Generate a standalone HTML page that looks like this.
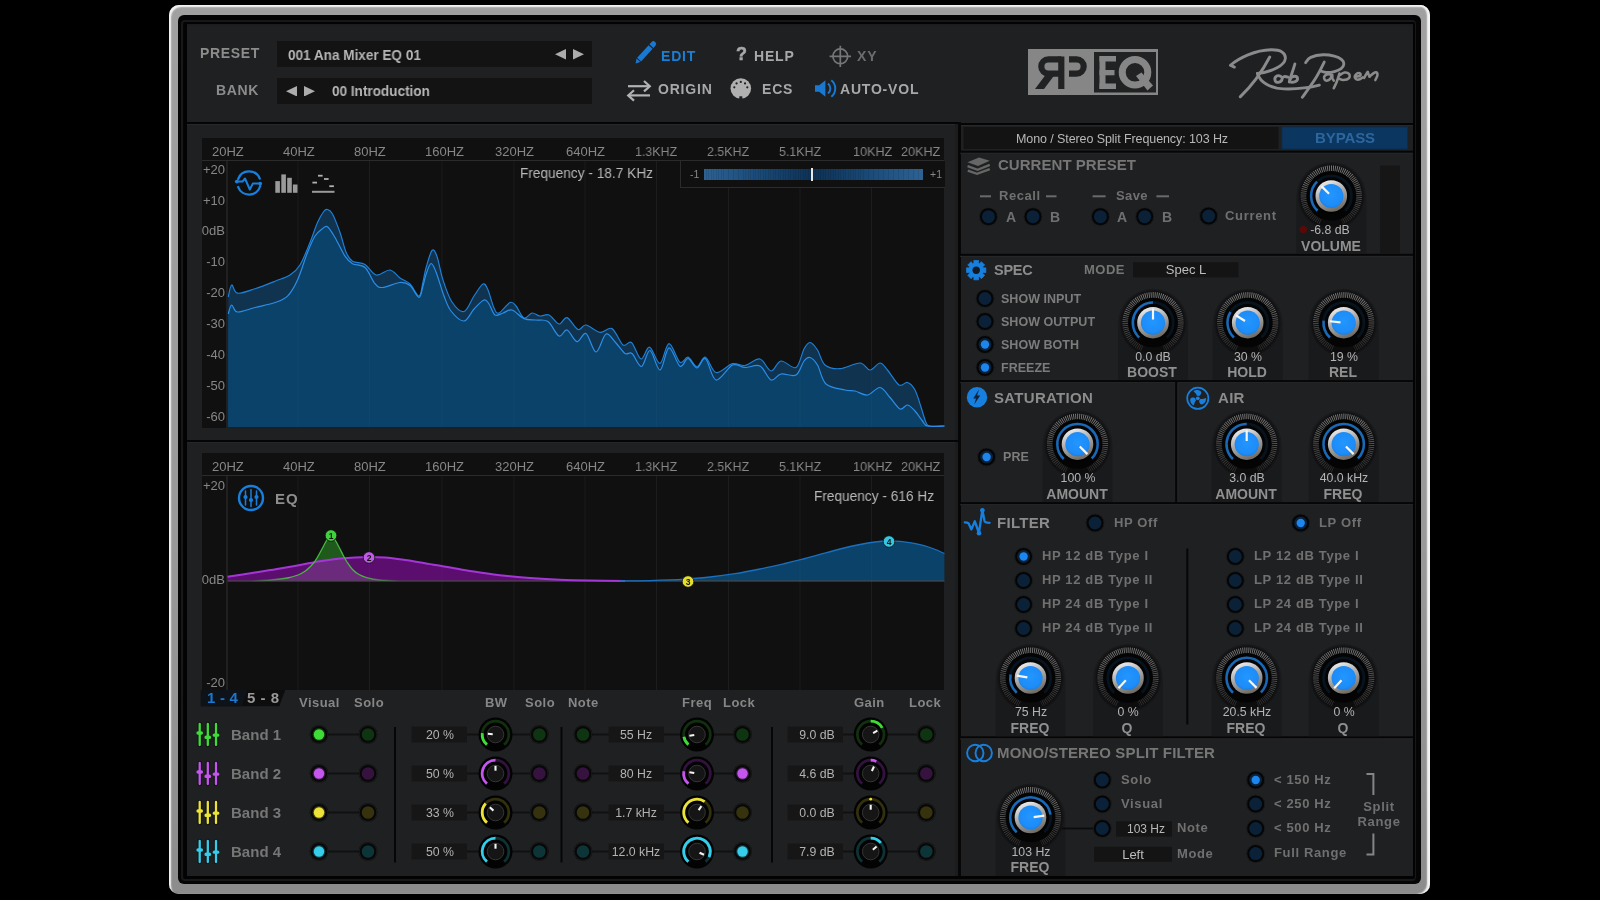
<!DOCTYPE html>
<html><head><meta charset="utf-8"><title>RP-EQ</title>
<style>
html,body{margin:0;padding:0;background:#000;}
body{width:1600px;height:900px;position:relative;overflow:hidden;font-family:"Liberation Sans", sans-serif;}
.t{position:absolute;white-space:nowrap;font-family:"Liberation Sans", sans-serif;will-change:transform;}
.r{position:absolute;}
</style></head><body>
<div class="r" style="left:169px;top:5px;width:1261px;height:889px;border-radius:10px;background:linear-gradient(180deg,#a0a0a0 0%,#999 60%,#8c8c8c 100%);box-shadow:inset 2px 2px 1.5px #f4f4f4, inset -3px 0 1.5px #f4f4f4, inset 0 -1px 1px #7c7c7c;"></div><div class="r" style="left:178px;top:14.8px;width:1243px;height:869.7px;border-radius:6px;background:#050505;"></div><div class="r" style="left:181.3px;top:19.7px;width:1231.1px;height:857.3px;border-radius:4px;border:2.4px solid #18181a;"></div><div class="r" style="left:183.7px;top:22.1px;width:1231.1px;height:857.3px;border-radius:2px;background:#030303;"></div><div class="r" style="left:187px;top:24.3px;width:1225.8px;height:851.7px;background:linear-gradient(180deg,#1b1b1d 0,#1f2022 3px);"></div><div class="r" style="left:187px;top:121.6px;width:772px;height:2.3px;background:#050505;"></div><div class="r" style="left:187px;top:123.9px;width:770px;height:1px;background:#27282a;"></div><div class="r" style="left:958px;top:122.8px;width:455px;height:2.2px;background:#050505;"></div><div class="r" style="left:961px;top:125px;width:452px;height:1px;background:#27282a;"></div><div class="r" style="left:955.3px;top:124px;width:3px;height:752px;background:#1b1c1e;"></div><div class="r" style="left:958.2px;top:122px;width:2.7px;height:754px;background:#070707;"></div><div class="t" style="left:199.5px;top:43.90px;line-height:18px;font-size:14px;color:#8c8c8c;font-weight:bold;letter-spacing:0.65px;">PRESET</div><div class="t" style="left:216px;top:80.80px;line-height:18px;font-size:14px;color:#8c8c8c;font-weight:bold;letter-spacing:0.65px;">BANK</div><div class="r" style="left:277px;top:41px;width:315px;height:26px;background:#131313;"></div><div class="r" style="left:277px;top:78px;width:315px;height:26px;background:#131313;"></div><div class="t" style="left:288px;top:45.50px;line-height:18px;font-size:14px;color:#b6b6b6;font-weight:bold;letter-spacing:0px;transform:scaleX(0.968);transform-origin:0 50%;">001 Ana Mixer EQ 01</div><div class="t" style="left:332px;top:82.00px;line-height:18px;font-size:14px;color:#b6b6b6;font-weight:bold;letter-spacing:0px;transform:scaleX(0.968);transform-origin:0 50%;">00 Introduction</div><svg class="r" style="left:555px;top:49.25px;" width="11" height="10.5" viewBox="0 0 11 10.5"><polygon points="11,0 11,10.5 0,5.25" fill="#acacac"/></svg><svg class="r" style="left:572.5px;top:49.25px;" width="11" height="10.5" viewBox="0 0 11 10.5"><polygon points="0,0 0,10.5 11,5.25" fill="#acacac"/></svg><svg class="r" style="left:286px;top:85.75px;" width="11" height="10.5" viewBox="0 0 11 10.5"><polygon points="11,0 11,10.5 0,5.25" fill="#acacac"/></svg><svg class="r" style="left:303.5px;top:85.75px;" width="11" height="10.5" viewBox="0 0 11 10.5"><polygon points="0,0 0,10.5 11,5.25" fill="#acacac"/></svg><div class="t" style="left:661px;top:46.50px;line-height:18px;font-size:14px;color:#1a7fd6;font-weight:bold;letter-spacing:0.8px;">EDIT</div><div class="t" style="left:754px;top:46.50px;line-height:18px;font-size:14px;color:#a8a8a8;font-weight:bold;letter-spacing:0.8px;">HELP</div><div class="t" style="left:735.5px;top:42.80px;line-height:23px;font-size:18px;color:#a8a8a8;font-weight:bold;letter-spacing:0px;-webkit-text-stroke:0.5px #a8a8a8;">?</div><div class="t" style="left:857px;top:46.50px;line-height:18px;font-size:14px;color:#6c6c6c;font-weight:bold;letter-spacing:0.8px;">XY</div><div class="t" style="left:658px;top:80.00px;line-height:18px;font-size:14px;color:#a8a8a8;font-weight:bold;letter-spacing:0.8px;">ORIGIN</div><div class="t" style="left:762px;top:80.00px;line-height:18px;font-size:14px;color:#a8a8a8;font-weight:bold;letter-spacing:0.8px;">ECS</div><div class="t" style="left:840px;top:80.00px;line-height:18px;font-size:14px;color:#a8a8a8;font-weight:bold;letter-spacing:0.8px;">AUTO-VOL</div><svg class="r" style="left:630px;top:38px;" width="30" height="30" viewBox="0 0 30 30"><g transform="translate(5.6,25.4) rotate(-47.5)" fill="#1a78d0"><polygon points="0,0 4.2,-2.6 4.2,2.6"/><rect x="5.2" y="-2.7" width="17" height="5.4"/><path d="M23.4,-2.7 h3.2 a2.4,2.7 0 0 1 0,5.4 h-3.2 z"/></g></svg><svg class="r" style="left:624px;top:78px;" width="30" height="26" viewBox="0 0 30 26"><g fill="none" stroke="#b2b2b2" stroke-width="2.2" stroke-linecap="butt" stroke-linejoin="miter"><path d="M4,8.2 H25.5"/><path d="M20,3 L25.8,8.2 L20,13.4"/><path d="M4.5,17.4 H26"/><path d="M10,12.2 L4.2,17.4 L10,22.6"/></g></svg><svg class="r" style="left:826px;top:42px;" width="30" height="30" viewBox="0 0 30 30"><g fill="none" stroke="#767676" stroke-width="1.7"><circle cx="14.3" cy="14.3" r="7.4"/><path d="M3.6,14.3 H25 M14.3,3.8 V25"/></g></svg><svg class="r" style="left:726px;top:74px;" width="30" height="30" viewBox="0 0 30 30"><circle cx="14.8" cy="14.5" r="10.3" fill="#b0b0b0"/><circle cx="8.30" cy="13.35" r="1.1" fill="#1f2022"/><circle cx="10.56" cy="9.44" r="1.1" fill="#1f2022"/><circle cx="14.80" cy="7.90" r="1.1" fill="#1f2022"/><circle cx="19.04" cy="9.44" r="1.1" fill="#1f2022"/><circle cx="21.30" cy="13.35" r="1.1" fill="#1f2022"/><rect x="13.3" y="22.3" width="3" height="3.2" fill="#1f2022"/></svg><svg class="r" style="left:812px;top:76px;" width="28" height="26" viewBox="0 0 28 26"><g fill="#1a78d0"><path d="M3,9.2 h4.2 l6.2,-5 v16.6 l-6.2,-5 h-4.2 z"/></g><g fill="none" stroke="#1a78d0" stroke-width="2"><path d="M16,7.5 a6.5,6.5 0 0 1 0,10"/><path d="M19.3,4.3 a10.5,10.5 0 0 1 0,16.4"/></g></svg><svg class="r" style="left:1028px;top:49px;" width="130" height="46" viewBox="0 0 130 46"><rect x="0" y="0" width="130" height="46" fill="#868686"/>
<g fill="none" stroke="#212224" stroke-width="6.2">
<path d="M33.3,7.5 V40"/>
<path d="M33.3,10.3 H20.5 A7.2,7.2 0 0 0 20.5,24.7 H33.3"/>
<path d="M41,10.3 H48.5 A7.2,7.2 0 0 1 48.5,24.7 H41"/>
</g>
<polygon points="17.5,26 26.5,26 16,40 7,40" fill="#212224"/>
<rect x="66" y="3" width="62" height="40.5" fill="#212224"/>
<g fill="#868686">
<rect x="71.5" y="7" width="6" height="33"/>
<rect x="71.5" y="7" width="16.5" height="5.5"/>
<rect x="71.5" y="21" width="15" height="5.3"/>
<rect x="71.5" y="34.5" width="16.5" height="5.5"/>
<polygon points="108,27 113.5,23.5 125,36.5 119.5,41.5"/>
</g>
<circle cx="107" cy="23.3" r="12.8" fill="none" stroke="#868686" stroke-width="7"/>
</svg><svg class="r" style="left:1220px;top:40px;" width="170" height="70" viewBox="0 0 170 70"><g transform="scale(0.10625)" fill="none" stroke="#8b8b8b" stroke-width="27" stroke-linecap="round" stroke-linejoin="round"><path d="M135,255 L98,238 C180,170 330,95 480,92 C570,90 620,120 615,175 C608,235 500,300 352,315"/><path d="M468,160 C400,290 290,440 190,535"/><path d="M352,315 C380,400 470,455 600,460 C700,463 820,455 935,425"/><path d="M575,345 C540,320 505,350 520,385 C535,410 580,400 585,365 C590,340 610,340 640,350"/><path d="M705,225 C690,280 665,340 652,395"/><path d="M658,370 C680,330 730,335 730,365 C730,395 680,405 655,390"/><path d="M806.0,213.0 C814.8,203.8 823.9,176.6 854.0,163.0 C884.1,149.4 929.3,141.0 970.0,139.0 C1010.7,137.0 1043.9,143.8 1076.0,152.0 C1108.1,160.2 1128.5,170.4 1145.0,184.0 C1161.5,197.6 1166.9,210.4 1166.0,226.0 C1165.1,241.6 1156.5,255.8 1140.0,269.0 C1123.5,282.2 1101.3,291.2 1076.0,298.0 C1050.7,304.8 1026.2,307.5 1002.0,306.0 C977.8,304.5 954.6,292.9 944.0,290.0"/><path d="M981.0,208.0 C966.1,235.9 937.8,299.3 900.0,360.0 C862.2,420.7 797.9,506.2 775.0,539.0"/><g stroke-width="24"><path d="M1045.0,327.0 C1039.1,326.1 1024.7,319.1 1013.0,322.0 C1001.3,324.9 984.9,332.4 981.0,343.0 C977.1,353.6 982.3,375.2 992.0,380.0 C1001.7,384.8 1022.5,378.7 1034.0,369.0 C1045.5,359.3 1050.6,328.6 1055.0,327.0 C1059.4,325.4 1055.1,349.7 1058.0,360.0 C1060.9,370.3 1068.6,378.8 1071.0,383.0"/><path d="M1124.0,316.0 C1119.6,329.6 1109.7,364.7 1100.0,390.0 C1090.3,415.3 1076.3,442.3 1071.0,454.0"/><path d="M1124.0,332.0 C1132.8,327.2 1155.5,308.4 1172.0,306.0 C1188.5,303.6 1206.3,309.3 1214.0,319.0 C1221.7,328.7 1223.7,348.4 1214.0,359.0 C1204.3,369.6 1179.0,376.6 1161.0,377.0 C1143.0,377.4 1124.2,363.9 1116.0,361.0"/><path d="M1280.0,345.0 C1286.6,343.5 1308.1,341.6 1316.0,337.0 C1323.9,332.4 1325.0,324.8 1323.0,320.0 C1321.0,315.2 1312.9,310.4 1305.0,311.0 C1297.1,311.6 1286.8,316.2 1280.0,323.0 C1273.2,329.8 1267.3,339.2 1268.0,348.0 C1268.7,356.8 1275.2,367.0 1284.0,371.0 C1292.8,375.0 1305.0,373.5 1316.0,370.0 C1327.0,366.5 1338.9,355.3 1344.0,352.0"/><path d="M1357.0,356.0 C1360.5,349.8 1369.8,332.6 1376.0,322.0 C1382.2,311.4 1387.0,297.4 1391.0,298.0 C1395.0,298.6 1394.9,316.4 1398.0,325.0 C1401.1,333.6 1406.2,341.3 1408.0,345.0"/><path d="M1408.0,345.0 C1413.9,339.7 1428.8,323.7 1440.0,316.0 C1451.2,308.3 1461.3,300.4 1469.0,303.0 C1476.7,305.6 1483.3,316.4 1482.0,330.0 C1480.7,343.6 1465.7,368.4 1462.0,377.0"/></g></g></svg><div class="r" style="left:202px;top:138px;width:742.4px;height:290px;background:#101010;"></div><div class="r" style="left:202px;top:160px;width:742.4px;height:1px;background:#2b2b2b;"></div><svg class="r" style="left:0;top:0" width="1600" height="900" viewBox="0 0 1600 900"><rect x="297.5" y="161" width="1" height="266" fill="#181818"/><rect x="369.0" y="161" width="1" height="266" fill="#181818"/><rect x="441.5" y="161" width="1" height="266" fill="#181818"/><rect x="513.5" y="161" width="1" height="266" fill="#181818"/><rect x="584.5" y="161" width="1" height="266" fill="#181818"/><rect x="656.0" y="161" width="1" height="266" fill="#181818"/><rect x="728.0" y="161" width="1" height="266" fill="#181818"/><rect x="799.5" y="161" width="1" height="266" fill="#181818"/><rect x="871.0" y="161" width="1" height="266" fill="#181818"/><path d="M228.2,297.0 C228.8,295.0 230.1,285.6 231.7,285.0 C233.2,284.4 233.6,292.6 237.5,293.2 C241.4,293.8 248.8,290.7 255.0,288.7 C261.2,286.7 269.2,283.5 275.0,281.2 C280.8,278.9 285.8,277.7 290.0,275.0 C294.2,272.3 296.7,270.4 300.0,265.0 C303.3,259.6 307.1,249.6 310.0,242.5 C312.9,235.4 315.2,227.7 317.5,222.5 C319.8,217.3 322.0,213.7 323.7,211.5 C325.4,209.3 326.0,209.1 327.5,209.5 C329.0,209.9 330.4,210.2 332.5,214.0 C334.6,217.8 337.7,226.1 340.0,232.5 C342.3,238.9 344.1,247.7 346.2,252.5 C348.3,257.3 349.4,259.2 352.5,261.2 C355.6,263.2 361.1,262.2 365.0,264.5 C368.9,266.8 372.0,274.1 376.2,275.0 C380.4,275.9 386.0,269.5 390.0,270.0 C394.0,270.5 396.7,275.7 400.0,278.0 C403.3,280.3 406.8,281.0 410.0,284.0 C413.2,287.0 416.8,296.3 419.0,296.0 C421.2,295.7 421.8,286.7 423.0,282.0 C424.2,277.3 424.5,273.2 426.0,268.0 C427.5,262.8 430.2,252.4 432.0,250.5 C433.8,248.6 435.2,251.6 437.0,256.5 C438.8,261.4 440.5,272.4 443.0,280.0 C445.5,287.6 448.5,296.8 452.0,302.0 C455.5,307.2 460.3,312.5 464.0,311.5 C467.7,310.5 470.8,300.6 474.0,296.0 C477.2,291.4 480.7,285.0 483.0,284.0 C485.3,283.0 486.2,286.0 488.0,290.0 C489.8,294.0 492.2,304.2 494.0,308.0 C495.8,311.8 496.3,313.9 499.0,313.0 C501.7,312.1 507.2,303.7 510.0,302.5 C512.8,301.3 513.7,303.4 516.0,306.0 C518.3,308.6 521.3,316.8 524.0,318.0 C526.7,319.2 529.3,313.3 532.0,313.0 C534.7,312.7 537.2,315.7 540.0,316.0 C542.8,316.3 545.8,313.7 549.0,315.0 C552.2,316.3 556.0,323.6 559.0,324.0 C562.0,324.4 563.8,316.7 567.0,317.6 C570.2,318.5 574.8,328.3 578.0,329.5 C581.2,330.7 582.3,324.5 586.0,325.0 C589.7,325.5 595.7,331.7 600.0,332.3 C604.3,332.9 608.2,326.5 612.0,328.6 C615.8,330.7 619.8,342.7 623.0,345.0 C626.2,347.3 628.5,340.1 631.5,342.4 C634.5,344.7 638.0,358.2 641.0,359.0 C644.0,359.8 646.3,346.5 649.5,347.2 C652.7,347.9 656.8,364.0 660.0,363.4 C663.2,362.8 665.7,343.8 669.0,343.6 C672.3,343.4 676.8,359.9 680.0,362.2 C683.2,364.5 685.2,356.5 688.0,357.2 C690.8,357.9 694.1,366.5 697.0,366.5 C699.9,366.5 702.3,356.2 705.5,357.2 C708.7,358.2 711.5,371.4 716.0,372.5 C720.5,373.6 727.7,364.9 732.5,363.7 C737.3,362.5 740.4,366.3 745.0,365.5 C749.6,364.7 755.7,358.1 760.0,359.0 C764.3,359.9 767.5,370.7 771.0,371.0 C774.5,371.3 776.8,361.6 781.0,361.0 C785.2,360.4 792.2,369.5 796.0,367.5 C799.8,365.5 801.7,353.2 804.0,349.0 C806.3,344.8 807.8,342.3 810.0,342.5 C812.2,342.7 815.0,346.2 817.5,350.0 C820.0,353.8 821.2,361.9 825.0,365.0 C828.8,368.1 834.2,369.0 840.0,368.7 C845.8,368.4 855.0,362.8 860.0,363.0 C865.0,363.2 866.7,370.0 870.0,370.0 C873.3,370.0 877.1,363.0 880.0,363.0 C882.9,363.0 884.3,366.3 887.5,370.0 C890.7,373.7 895.7,382.9 899.0,385.0 C902.3,387.1 904.8,381.7 907.5,382.5 C910.2,383.3 912.8,385.9 915.0,390.0 C917.2,394.1 919.2,401.6 921.0,407.0 C922.8,412.4 924.5,419.3 926.0,422.5 C927.5,425.7 926.9,425.4 930.0,426.0 C933.1,426.6 942.0,426.0 944.4,426.0 L944.4,427.2 L228,427.2 Z" fill="#10334f"/><path d="M228.2,314.0 C228.8,312.5 230.1,305.3 231.7,305.0 C233.2,304.7 233.6,311.6 237.5,312.0 C241.4,312.4 248.8,309.1 255.0,307.5 C261.2,305.9 269.6,304.4 275.0,302.5 C280.4,300.6 283.8,299.9 287.5,296.2 C291.2,292.4 294.2,287.3 297.5,280.0 C300.8,272.7 304.6,259.8 307.5,252.5 C310.4,245.2 312.6,239.9 315.0,236.0 C317.4,232.1 319.9,230.6 322.0,229.0 C324.1,227.4 325.3,225.3 327.5,226.7 C329.7,228.1 332.1,232.6 335.0,237.5 C337.9,242.4 342.1,251.8 345.0,256.2 C347.9,260.6 349.2,261.8 352.5,263.7 C355.8,265.6 361.2,264.2 365.0,267.5 C368.8,270.8 372.1,280.4 375.0,283.7 C377.9,287.0 378.3,287.7 382.5,287.5 C386.7,287.3 395.4,282.8 400.0,282.5 C404.6,282.2 406.8,283.0 410.0,285.5 C413.2,288.0 416.8,297.2 419.0,297.3 C421.2,297.4 421.8,289.8 423.0,286.0 C424.2,282.2 424.7,278.2 426.0,274.5 C427.3,270.8 429.3,263.9 431.0,263.5 C432.7,263.1 433.8,266.6 436.0,272.0 C438.2,277.4 441.5,289.5 444.0,296.0 C446.5,302.5 447.7,306.8 451.0,311.0 C454.3,315.2 460.2,321.3 464.0,321.0 C467.8,320.7 470.7,312.5 474.0,309.0 C477.3,305.5 481.5,300.8 484.0,300.0 C486.5,299.2 487.2,301.5 489.0,304.0 C490.8,306.5 492.7,313.5 495.0,315.0 C497.3,316.5 500.2,313.8 503.0,313.0 C505.8,312.2 508.5,309.1 512.0,310.0 C515.5,310.9 520.0,316.9 524.0,318.6 C528.0,320.3 532.0,319.5 536.0,320.0 C540.0,320.5 544.2,318.9 548.0,321.6 C551.8,324.3 555.8,334.6 559.0,336.0 C562.2,337.4 564.0,329.1 567.0,330.0 C570.0,330.9 573.8,341.0 577.0,341.6 C580.2,342.2 582.8,331.8 586.0,333.5 C589.2,335.2 592.7,351.9 596.0,352.0 C599.3,352.1 602.7,335.5 606.0,334.0 C609.3,332.5 612.8,339.8 616.0,343.0 C619.2,346.2 622.3,351.8 625.0,353.5 C627.7,355.2 629.2,351.3 632.0,353.5 C634.8,355.7 638.5,367.0 641.5,366.5 C644.5,366.0 646.9,349.9 650.0,350.5 C653.1,351.1 656.8,370.4 660.0,370.0 C663.2,369.6 665.7,348.4 669.0,347.8 C672.3,347.2 676.8,364.4 680.0,366.2 C683.2,368.0 685.2,358.2 688.0,358.5 C690.8,358.8 694.1,368.0 697.0,368.0 C699.9,368.0 702.3,356.7 705.5,358.7 C708.7,360.7 711.5,378.9 716.0,380.0 C720.5,381.1 727.7,367.1 732.5,365.0 C737.3,362.9 740.4,367.3 745.0,367.5 C749.6,367.7 755.7,363.9 760.0,366.0 C764.3,368.1 767.5,378.7 771.0,380.0 C774.5,381.3 776.8,374.8 781.0,374.0 C785.2,373.2 792.2,377.2 796.0,375.0 C799.8,372.8 801.7,363.9 804.0,361.0 C806.3,358.1 807.8,356.8 810.0,357.5 C812.2,358.2 814.8,360.6 817.5,365.0 C820.2,369.4 821.4,379.8 826.0,384.0 C830.6,388.2 840.2,388.8 845.0,390.0 C849.8,391.2 851.2,390.2 855.0,391.0 C858.8,391.8 863.3,395.6 867.5,395.0 C871.7,394.4 876.2,387.1 880.0,387.5 C883.8,387.9 886.7,393.9 890.0,397.5 C893.3,401.1 897.1,407.8 900.0,409.0 C902.9,410.2 905.0,404.7 907.5,405.0 C910.0,405.3 912.5,408.3 915.0,411.0 C917.5,413.7 920.4,418.5 922.5,421.0 C924.6,423.5 923.9,425.2 927.5,426.0 C931.1,426.8 941.6,426.0 944.4,426.0 L944.4,427.2 L228,427.2 Z" fill="#0b4269"/><rect x="297.5" y="161" width="1" height="266" fill="#ffffff" opacity="0.022"/><rect x="369.0" y="161" width="1" height="266" fill="#ffffff" opacity="0.022"/><rect x="441.5" y="161" width="1" height="266" fill="#ffffff" opacity="0.022"/><rect x="513.5" y="161" width="1" height="266" fill="#ffffff" opacity="0.022"/><rect x="584.5" y="161" width="1" height="266" fill="#ffffff" opacity="0.022"/><rect x="656.0" y="161" width="1" height="266" fill="#ffffff" opacity="0.022"/><rect x="728.0" y="161" width="1" height="266" fill="#ffffff" opacity="0.022"/><rect x="799.5" y="161" width="1" height="266" fill="#ffffff" opacity="0.022"/><rect x="871.0" y="161" width="1" height="266" fill="#ffffff" opacity="0.022"/><path d="M228.2,297.0 C228.8,295.0 230.1,285.6 231.7,285.0 C233.2,284.4 233.6,292.6 237.5,293.2 C241.4,293.8 248.8,290.7 255.0,288.7 C261.2,286.7 269.2,283.5 275.0,281.2 C280.8,278.9 285.8,277.7 290.0,275.0 C294.2,272.3 296.7,270.4 300.0,265.0 C303.3,259.6 307.1,249.6 310.0,242.5 C312.9,235.4 315.2,227.7 317.5,222.5 C319.8,217.3 322.0,213.7 323.7,211.5 C325.4,209.3 326.0,209.1 327.5,209.5 C329.0,209.9 330.4,210.2 332.5,214.0 C334.6,217.8 337.7,226.1 340.0,232.5 C342.3,238.9 344.1,247.7 346.2,252.5 C348.3,257.3 349.4,259.2 352.5,261.2 C355.6,263.2 361.1,262.2 365.0,264.5 C368.9,266.8 372.0,274.1 376.2,275.0 C380.4,275.9 386.0,269.5 390.0,270.0 C394.0,270.5 396.7,275.7 400.0,278.0 C403.3,280.3 406.8,281.0 410.0,284.0 C413.2,287.0 416.8,296.3 419.0,296.0 C421.2,295.7 421.8,286.7 423.0,282.0 C424.2,277.3 424.5,273.2 426.0,268.0 C427.5,262.8 430.2,252.4 432.0,250.5 C433.8,248.6 435.2,251.6 437.0,256.5 C438.8,261.4 440.5,272.4 443.0,280.0 C445.5,287.6 448.5,296.8 452.0,302.0 C455.5,307.2 460.3,312.5 464.0,311.5 C467.7,310.5 470.8,300.6 474.0,296.0 C477.2,291.4 480.7,285.0 483.0,284.0 C485.3,283.0 486.2,286.0 488.0,290.0 C489.8,294.0 492.2,304.2 494.0,308.0 C495.8,311.8 496.3,313.9 499.0,313.0 C501.7,312.1 507.2,303.7 510.0,302.5 C512.8,301.3 513.7,303.4 516.0,306.0 C518.3,308.6 521.3,316.8 524.0,318.0 C526.7,319.2 529.3,313.3 532.0,313.0 C534.7,312.7 537.2,315.7 540.0,316.0 C542.8,316.3 545.8,313.7 549.0,315.0 C552.2,316.3 556.0,323.6 559.0,324.0 C562.0,324.4 563.8,316.7 567.0,317.6 C570.2,318.5 574.8,328.3 578.0,329.5 C581.2,330.7 582.3,324.5 586.0,325.0 C589.7,325.5 595.7,331.7 600.0,332.3 C604.3,332.9 608.2,326.5 612.0,328.6 C615.8,330.7 619.8,342.7 623.0,345.0 C626.2,347.3 628.5,340.1 631.5,342.4 C634.5,344.7 638.0,358.2 641.0,359.0 C644.0,359.8 646.3,346.5 649.5,347.2 C652.7,347.9 656.8,364.0 660.0,363.4 C663.2,362.8 665.7,343.8 669.0,343.6 C672.3,343.4 676.8,359.9 680.0,362.2 C683.2,364.5 685.2,356.5 688.0,357.2 C690.8,357.9 694.1,366.5 697.0,366.5 C699.9,366.5 702.3,356.2 705.5,357.2 C708.7,358.2 711.5,371.4 716.0,372.5 C720.5,373.6 727.7,364.9 732.5,363.7 C737.3,362.5 740.4,366.3 745.0,365.5 C749.6,364.7 755.7,358.1 760.0,359.0 C764.3,359.9 767.5,370.7 771.0,371.0 C774.5,371.3 776.8,361.6 781.0,361.0 C785.2,360.4 792.2,369.5 796.0,367.5 C799.8,365.5 801.7,353.2 804.0,349.0 C806.3,344.8 807.8,342.3 810.0,342.5 C812.2,342.7 815.0,346.2 817.5,350.0 C820.0,353.8 821.2,361.9 825.0,365.0 C828.8,368.1 834.2,369.0 840.0,368.7 C845.8,368.4 855.0,362.8 860.0,363.0 C865.0,363.2 866.7,370.0 870.0,370.0 C873.3,370.0 877.1,363.0 880.0,363.0 C882.9,363.0 884.3,366.3 887.5,370.0 C890.7,373.7 895.7,382.9 899.0,385.0 C902.3,387.1 904.8,381.7 907.5,382.5 C910.2,383.3 912.8,385.9 915.0,390.0 C917.2,394.1 919.2,401.6 921.0,407.0 C922.8,412.4 924.5,419.3 926.0,422.5 C927.5,425.7 926.9,425.4 930.0,426.0 C933.1,426.6 942.0,426.0 944.4,426.0" fill="none" stroke="#1d7fd6" stroke-width="1.2"/><path d="M228.2,314.0 C228.8,312.5 230.1,305.3 231.7,305.0 C233.2,304.7 233.6,311.6 237.5,312.0 C241.4,312.4 248.8,309.1 255.0,307.5 C261.2,305.9 269.6,304.4 275.0,302.5 C280.4,300.6 283.8,299.9 287.5,296.2 C291.2,292.4 294.2,287.3 297.5,280.0 C300.8,272.7 304.6,259.8 307.5,252.5 C310.4,245.2 312.6,239.9 315.0,236.0 C317.4,232.1 319.9,230.6 322.0,229.0 C324.1,227.4 325.3,225.3 327.5,226.7 C329.7,228.1 332.1,232.6 335.0,237.5 C337.9,242.4 342.1,251.8 345.0,256.2 C347.9,260.6 349.2,261.8 352.5,263.7 C355.8,265.6 361.2,264.2 365.0,267.5 C368.8,270.8 372.1,280.4 375.0,283.7 C377.9,287.0 378.3,287.7 382.5,287.5 C386.7,287.3 395.4,282.8 400.0,282.5 C404.6,282.2 406.8,283.0 410.0,285.5 C413.2,288.0 416.8,297.2 419.0,297.3 C421.2,297.4 421.8,289.8 423.0,286.0 C424.2,282.2 424.7,278.2 426.0,274.5 C427.3,270.8 429.3,263.9 431.0,263.5 C432.7,263.1 433.8,266.6 436.0,272.0 C438.2,277.4 441.5,289.5 444.0,296.0 C446.5,302.5 447.7,306.8 451.0,311.0 C454.3,315.2 460.2,321.3 464.0,321.0 C467.8,320.7 470.7,312.5 474.0,309.0 C477.3,305.5 481.5,300.8 484.0,300.0 C486.5,299.2 487.2,301.5 489.0,304.0 C490.8,306.5 492.7,313.5 495.0,315.0 C497.3,316.5 500.2,313.8 503.0,313.0 C505.8,312.2 508.5,309.1 512.0,310.0 C515.5,310.9 520.0,316.9 524.0,318.6 C528.0,320.3 532.0,319.5 536.0,320.0 C540.0,320.5 544.2,318.9 548.0,321.6 C551.8,324.3 555.8,334.6 559.0,336.0 C562.2,337.4 564.0,329.1 567.0,330.0 C570.0,330.9 573.8,341.0 577.0,341.6 C580.2,342.2 582.8,331.8 586.0,333.5 C589.2,335.2 592.7,351.9 596.0,352.0 C599.3,352.1 602.7,335.5 606.0,334.0 C609.3,332.5 612.8,339.8 616.0,343.0 C619.2,346.2 622.3,351.8 625.0,353.5 C627.7,355.2 629.2,351.3 632.0,353.5 C634.8,355.7 638.5,367.0 641.5,366.5 C644.5,366.0 646.9,349.9 650.0,350.5 C653.1,351.1 656.8,370.4 660.0,370.0 C663.2,369.6 665.7,348.4 669.0,347.8 C672.3,347.2 676.8,364.4 680.0,366.2 C683.2,368.0 685.2,358.2 688.0,358.5 C690.8,358.8 694.1,368.0 697.0,368.0 C699.9,368.0 702.3,356.7 705.5,358.7 C708.7,360.7 711.5,378.9 716.0,380.0 C720.5,381.1 727.7,367.1 732.5,365.0 C737.3,362.9 740.4,367.3 745.0,367.5 C749.6,367.7 755.7,363.9 760.0,366.0 C764.3,368.1 767.5,378.7 771.0,380.0 C774.5,381.3 776.8,374.8 781.0,374.0 C785.2,373.2 792.2,377.2 796.0,375.0 C799.8,372.8 801.7,363.9 804.0,361.0 C806.3,358.1 807.8,356.8 810.0,357.5 C812.2,358.2 814.8,360.6 817.5,365.0 C820.2,369.4 821.4,379.8 826.0,384.0 C830.6,388.2 840.2,388.8 845.0,390.0 C849.8,391.2 851.2,390.2 855.0,391.0 C858.8,391.8 863.3,395.6 867.5,395.0 C871.7,394.4 876.2,387.1 880.0,387.5 C883.8,387.9 886.7,393.9 890.0,397.5 C893.3,401.1 897.1,407.8 900.0,409.0 C902.9,410.2 905.0,404.7 907.5,405.0 C910.0,405.3 912.5,408.3 915.0,411.0 C917.5,413.7 920.4,418.5 922.5,421.0 C924.6,423.5 923.9,425.2 927.5,426.0 C931.1,426.8 941.6,426.0 944.4,426.0" fill="none" stroke="#2c8ee8" stroke-width="1.2"/><rect x="226.5" y="161" width="1" height="267" fill="#303030"/></svg><div class="t" style="left:212px;top:142.70px;line-height:17px;font-size:13px;color:#878787;font-weight:normal;letter-spacing:0px;transform:scaleX(0.99);transform-origin:0 50%;">20HZ</div><div class="t" style="left:283px;top:142.70px;line-height:17px;font-size:13px;color:#878787;font-weight:normal;letter-spacing:0px;transform:scaleX(0.99);transform-origin:0 50%;">40HZ</div><div class="t" style="left:354px;top:142.70px;line-height:17px;font-size:13px;color:#878787;font-weight:normal;letter-spacing:0px;transform:scaleX(0.99);transform-origin:0 50%;">80HZ</div><div class="t" style="left:425px;top:142.70px;line-height:17px;font-size:13px;color:#878787;font-weight:normal;letter-spacing:0px;transform:scaleX(0.99);transform-origin:0 50%;">160HZ</div><div class="t" style="left:495px;top:142.70px;line-height:17px;font-size:13px;color:#878787;font-weight:normal;letter-spacing:0px;transform:scaleX(0.99);transform-origin:0 50%;">320HZ</div><div class="t" style="left:566px;top:142.70px;line-height:17px;font-size:13px;color:#878787;font-weight:normal;letter-spacing:0px;transform:scaleX(0.99);transform-origin:0 50%;">640HZ</div><div class="t" style="left:635px;top:142.70px;line-height:17px;font-size:13px;color:#878787;font-weight:normal;letter-spacing:0px;transform:scaleX(0.955);transform-origin:0 50%;">1.3KHZ</div><div class="t" style="left:707px;top:142.70px;line-height:17px;font-size:13px;color:#878787;font-weight:normal;letter-spacing:0px;transform:scaleX(0.955);transform-origin:0 50%;">2.5KHZ</div><div class="t" style="left:779px;top:142.70px;line-height:17px;font-size:13px;color:#878787;font-weight:normal;letter-spacing:0px;transform:scaleX(0.955);transform-origin:0 50%;">5.1KHZ</div><div class="t" style="left:853px;top:142.70px;line-height:17px;font-size:13px;color:#878787;font-weight:normal;letter-spacing:0px;transform:scaleX(0.97);transform-origin:0 50%;">10KHZ</div><div class="t" style="left:901px;top:142.70px;line-height:17px;font-size:13px;color:#878787;font-weight:normal;letter-spacing:0px;transform:scaleX(0.97);transform-origin:0 50%;">20KHZ</div><div class="t" style="left:224.5px;top:160.70px;line-height:17px;font-size:13px;color:#878787;font-weight:normal;letter-spacing:0px;transform:translateX(-100%);">+20</div><div class="t" style="left:224.5px;top:191.50px;line-height:17px;font-size:13px;color:#878787;font-weight:normal;letter-spacing:0px;transform:translateX(-100%);">+10</div><div class="t" style="left:224.5px;top:222.30px;line-height:17px;font-size:13px;color:#878787;font-weight:normal;letter-spacing:0px;transform:translateX(-100%);">0dB</div><div class="t" style="left:224.5px;top:253.10px;line-height:17px;font-size:13px;color:#878787;font-weight:normal;letter-spacing:0px;transform:translateX(-100%);">-10</div><div class="t" style="left:224.5px;top:284.10px;line-height:17px;font-size:13px;color:#878787;font-weight:normal;letter-spacing:0px;transform:translateX(-100%);">-20</div><div class="t" style="left:224.5px;top:315.00px;line-height:17px;font-size:13px;color:#878787;font-weight:normal;letter-spacing:0px;transform:translateX(-100%);">-30</div><div class="t" style="left:224.5px;top:345.90px;line-height:17px;font-size:13px;color:#878787;font-weight:normal;letter-spacing:0px;transform:translateX(-100%);">-40</div><div class="t" style="left:224.5px;top:376.90px;line-height:17px;font-size:13px;color:#878787;font-weight:normal;letter-spacing:0px;transform:translateX(-100%);">-50</div><div class="t" style="left:224.5px;top:407.90px;line-height:17px;font-size:13px;color:#878787;font-weight:normal;letter-spacing:0px;transform:translateX(-100%);">-60</div><div class="t" style="left:520.3px;top:164.40px;line-height:19px;font-size:14.4px;color:#b8b8b8;font-weight:normal;letter-spacing:0px;transform:scaleX(0.95);transform-origin:0 50%;">Frequency - 18.7 KHz</div><div class="r" style="left:681px;top:161px;width:264px;height:26px;background:#101010;"></div><div class="r" style="left:680px;top:161px;width:1px;height:27px;background:#2b2b2b;"></div><div class="r" style="left:680px;top:187px;width:265px;height:1px;background:#2b2b2b;"></div><div class="t" style="left:689.5px;top:166.80px;line-height:14px;font-size:10.5px;color:#878787;font-weight:normal;letter-spacing:0px;">-1</div><div class="t" style="left:929.6px;top:166.80px;line-height:14px;font-size:10.5px;color:#878787;font-weight:normal;letter-spacing:0px;">+1</div><div class="r" style="left:704px;top:168.5px;width:219px;height:11px;background:linear-gradient(90deg,#2d6294 0%,#1a4a78 25%,#0e3357 48%,#0e3357 52%,#1a4a78 75%,#2d6294 100%);"></div><div class="r" style="left:704px;top:168.5px;width:219px;height:11px;background:repeating-linear-gradient(90deg,rgba(0,0,0,0) 0,rgba(0,0,0,0) 1.5px,rgba(0,0,0,0.1) 1.5px,rgba(0,0,0,0.1) 2.5px);"></div><div class="r" style="left:811px;top:167.5px;width:2px;height:13px;background:#e8e8e8;"></div><svg class="r" style="left:228px;top:162px;" width="42" height="42" viewBox="0 0 42 42"><g fill="none" stroke="#1780de" stroke-width="2.3" stroke-linecap="round"><path d="M31.76,16.65 A11.6,11.6 0 0 0 10.10,17.03"/><path d="M10.10,24.97 A11.6,11.6 0 0 0 32.20,24.00"/><path d="M8.8,19.6 H14.5 L17,16.5 L21.8,27.5 L24.8,21.6 H32" stroke-linejoin="round" stroke-width="2"/></g><circle cx="8.8" cy="19.6" r="1.9" fill="#1780de"/><circle cx="32.2" cy="21.6" r="1.9" fill="#1780de"/></svg><svg class="r" style="left:0;top:0" width="400" height="200" viewBox="0 0 400 200"><rect x="275.3" y="181.1" width="4.6" height="11.7" fill="#9a9a9a"/><rect x="281.3" y="174.4" width="4.6" height="18.4" fill="#9a9a9a"/><rect x="287.2" y="177.8" width="4.6" height="15.0" fill="#9a9a9a"/><rect x="292.9" y="184.5" width="4.6" height="8.3" fill="#9a9a9a"/><rect x="312" y="190.8" width="22.5" height="2" fill="#9a9a9a"/><rect x="318" y="174.8" width="4.6" height="1.8" fill="#b0b0b0"/><rect x="324" y="178.1" width="4.6" height="1.8" fill="#b0b0b0"/><rect x="312.4" y="181.7" width="4.6" height="1.8" fill="#b0b0b0"/><rect x="329.3" y="185.3" width="4.6" height="1.8" fill="#b0b0b0"/></svg><div class="r" style="left:187px;top:440px;width:771.5px;height:1.9px;background:#050505;"></div><div class="r" style="left:187px;top:441.9px;width:768px;height:1px;background:#252628;"></div><div class="r" style="left:202px;top:453px;width:742.4px;height:237px;background:#101010;"></div><div class="r" style="left:202px;top:475px;width:742.4px;height:1px;background:#2b2b2b;"></div><svg class="r" style="left:0;top:0" width="1600" height="900" viewBox="0 0 1600 900"><rect x="297.5" y="476" width="1" height="214" fill="#181818"/><rect x="369.0" y="476" width="1" height="214" fill="#181818"/><rect x="441.5" y="476" width="1" height="214" fill="#181818"/><rect x="513.5" y="476" width="1" height="214" fill="#181818"/><rect x="584.5" y="476" width="1" height="214" fill="#181818"/><rect x="656.0" y="476" width="1" height="214" fill="#181818"/><rect x="728.0" y="476" width="1" height="214" fill="#181818"/><rect x="799.5" y="476" width="1" height="214" fill="#181818"/><rect x="871.0" y="476" width="1" height="214" fill="#181818"/><rect x="226.5" y="476" width="1" height="214" fill="#303030"/><clipPath id="cpp"><path d="M227.5,576.8 C232.1,576.1 246.2,573.9 255.0,572.5 C263.8,571.1 272.5,569.8 280.0,568.5 C287.5,567.2 293.3,566.2 300.0,565.0 C306.7,563.8 313.3,562.3 320.0,561.2 C326.7,560.1 334.2,559.1 340.0,558.5 C345.8,557.9 350.2,557.6 355.0,557.4 C359.8,557.1 364.0,557.0 369.0,557.0 C374.0,557.0 379.0,557.1 385.0,557.6 C391.0,558.1 398.3,559.1 405.0,560.0 C411.7,560.9 418.8,562.2 425.0,563.2 C431.2,564.2 436.7,565.2 442.5,566.2 C448.3,567.2 453.8,568.2 460.0,569.3 C466.2,570.3 472.5,571.4 480.0,572.5 C487.5,573.6 496.7,574.9 505.0,575.8 C513.3,576.7 520.8,577.3 530.0,578.0 C539.2,578.7 550.0,579.4 560.0,579.8 C570.0,580.2 579.2,580.4 590.0,580.6 C600.8,580.8 619.2,580.9 625.0,581.0 L625,581 L227.5,581 Z"/></clipPath><path d="M250.0,581.0 C253.3,580.8 263.8,580.5 270.0,580.0 C276.2,579.5 282.8,578.8 287.5,578.0 C292.2,577.2 295.1,576.1 298.0,575.0 C300.9,573.9 302.8,572.7 305.0,571.2 C307.2,569.7 309.3,567.7 311.0,566.0 C312.7,564.3 313.7,563.1 315.0,561.2 C316.3,559.3 317.8,556.7 319.0,554.5 C320.2,552.3 321.3,550.2 322.5,548.0 C323.7,545.8 324.9,543.3 326.0,541.5 C327.1,539.7 328.2,538.0 329.0,537.0 C329.8,536.0 330.3,535.8 331.0,535.8 C331.7,535.8 332.2,536.0 333.0,537.0 C333.8,538.0 334.9,539.7 336.0,541.5 C337.1,543.3 338.3,545.8 339.5,548.0 C340.7,550.2 341.8,552.7 343.0,555.0 C344.2,557.3 345.4,559.6 347.0,562.0 C348.6,564.4 350.5,567.4 352.5,569.5 C354.5,571.6 356.5,573.1 359.0,574.5 C361.5,575.9 364.0,576.9 367.5,577.8 C371.0,578.7 374.6,579.5 380.0,580.0 C385.4,580.5 396.7,580.8 400.0,581.0 L400,581 L250,581 Z" fill="#1f5a1c"/><path d="M227.5,576.8 C232.1,576.1 246.2,573.9 255.0,572.5 C263.8,571.1 272.5,569.8 280.0,568.5 C287.5,567.2 293.3,566.2 300.0,565.0 C306.7,563.8 313.3,562.3 320.0,561.2 C326.7,560.1 334.2,559.1 340.0,558.5 C345.8,557.9 350.2,557.6 355.0,557.4 C359.8,557.1 364.0,557.0 369.0,557.0 C374.0,557.0 379.0,557.1 385.0,557.6 C391.0,558.1 398.3,559.1 405.0,560.0 C411.7,560.9 418.8,562.2 425.0,563.2 C431.2,564.2 436.7,565.2 442.5,566.2 C448.3,567.2 453.8,568.2 460.0,569.3 C466.2,570.3 472.5,571.4 480.0,572.5 C487.5,573.6 496.7,574.9 505.0,575.8 C513.3,576.7 520.8,577.3 530.0,578.0 C539.2,578.7 550.0,579.4 560.0,579.8 C570.0,580.2 579.2,580.4 590.0,580.6 C600.8,580.8 619.2,580.9 625.0,581.0 L625,581 L227.5,581 Z" fill="#5c0e6e"/><path d="M250.0,581.0 C253.3,580.8 263.8,580.5 270.0,580.0 C276.2,579.5 282.8,578.8 287.5,578.0 C292.2,577.2 295.1,576.1 298.0,575.0 C300.9,573.9 302.8,572.7 305.0,571.2 C307.2,569.7 309.3,567.7 311.0,566.0 C312.7,564.3 313.7,563.1 315.0,561.2 C316.3,559.3 317.8,556.7 319.0,554.5 C320.2,552.3 321.3,550.2 322.5,548.0 C323.7,545.8 324.9,543.3 326.0,541.5 C327.1,539.7 328.2,538.0 329.0,537.0 C329.8,536.0 330.3,535.8 331.0,535.8 C331.7,535.8 332.2,536.0 333.0,537.0 C333.8,538.0 334.9,539.7 336.0,541.5 C337.1,543.3 338.3,545.8 339.5,548.0 C340.7,550.2 341.8,552.7 343.0,555.0 C344.2,557.3 345.4,559.6 347.0,562.0 C348.6,564.4 350.5,567.4 352.5,569.5 C354.5,571.6 356.5,573.1 359.0,574.5 C361.5,575.9 364.0,576.9 367.5,577.8 C371.0,578.7 374.6,579.5 380.0,580.0 C385.4,580.5 396.7,580.8 400.0,581.0 L400,581 L250,581 Z" fill="#6b2a7c" clip-path="url(#cpp)"/><path d="M620.0,581.0 C625.0,580.9 639.2,580.9 650.0,580.6 C660.8,580.3 675.0,579.8 685.0,579.2 C695.0,578.6 701.7,577.9 710.0,577.0 C718.3,576.1 726.7,575.0 735.0,573.7 C743.3,572.4 751.7,570.7 760.0,569.0 C768.3,567.3 777.5,565.2 785.0,563.5 C792.5,561.8 798.8,560.1 805.0,558.5 C811.2,556.9 816.3,555.4 822.5,553.7 C828.7,552.0 835.8,550.0 842.0,548.5 C848.2,547.0 854.5,545.6 860.0,544.5 C865.5,543.4 870.2,542.6 875.0,542.0 C879.8,541.4 884.8,541.1 889.0,541.0 C893.2,540.9 896.5,541.1 900.0,541.4 C903.5,541.7 906.7,542.2 910.0,542.7 C913.3,543.2 916.7,543.8 920.0,544.6 C923.3,545.4 927.0,546.5 930.0,547.5 C933.0,548.5 935.6,549.5 938.0,550.5 C940.4,551.5 943.3,553.2 944.4,553.7 L944.4,581 L620,581 Z" fill="#0b4269"/><rect x="297.5" y="476" width="1" height="214" fill="#ffffff" opacity="0.022"/><rect x="369.0" y="476" width="1" height="214" fill="#ffffff" opacity="0.022"/><rect x="441.5" y="476" width="1" height="214" fill="#ffffff" opacity="0.022"/><rect x="513.5" y="476" width="1" height="214" fill="#ffffff" opacity="0.022"/><rect x="584.5" y="476" width="1" height="214" fill="#ffffff" opacity="0.022"/><rect x="656.0" y="476" width="1" height="214" fill="#ffffff" opacity="0.022"/><rect x="728.0" y="476" width="1" height="214" fill="#ffffff" opacity="0.022"/><rect x="799.5" y="476" width="1" height="214" fill="#ffffff" opacity="0.022"/><rect x="871.0" y="476" width="1" height="214" fill="#ffffff" opacity="0.022"/><rect x="227.5" y="580.4" width="716.9" height="1.2" fill="#4a4a4a"/><path d="M227.5,576.8 C232.1,576.1 246.2,573.9 255.0,572.5 C263.8,571.1 272.5,569.8 280.0,568.5 C287.5,567.2 293.3,566.2 300.0,565.0 C306.7,563.8 313.3,562.3 320.0,561.2 C326.7,560.1 334.2,559.1 340.0,558.5 C345.8,557.9 350.2,557.6 355.0,557.4 C359.8,557.1 364.0,557.0 369.0,557.0 C374.0,557.0 379.0,557.1 385.0,557.6 C391.0,558.1 398.3,559.1 405.0,560.0 C411.7,560.9 418.8,562.2 425.0,563.2 C431.2,564.2 436.7,565.2 442.5,566.2 C448.3,567.2 453.8,568.2 460.0,569.3 C466.2,570.3 472.5,571.4 480.0,572.5 C487.5,573.6 496.7,574.9 505.0,575.8 C513.3,576.7 520.8,577.3 530.0,578.0 C539.2,578.7 550.0,579.4 560.0,579.8 C570.0,580.2 579.2,580.4 590.0,580.6 C600.8,580.8 619.2,580.9 625.0,581.0" fill="none" stroke="#a436d8" stroke-width="2"/><linearGradient id="gfade" gradientUnits="userSpaceOnUse" x1="250" y1="0" x2="400" y2="0"><stop offset="0" stop-color="#46b840" stop-opacity="0"/><stop offset="0.25" stop-color="#46b840" stop-opacity="1"/><stop offset="0.75" stop-color="#46b840" stop-opacity="1"/><stop offset="1" stop-color="#46b840" stop-opacity="0"/></linearGradient><path d="M250.0,581.0 C253.3,580.8 263.8,580.5 270.0,580.0 C276.2,579.5 282.8,578.8 287.5,578.0 C292.2,577.2 295.1,576.1 298.0,575.0 C300.9,573.9 302.8,572.7 305.0,571.2 C307.2,569.7 309.3,567.7 311.0,566.0 C312.7,564.3 313.7,563.1 315.0,561.2 C316.3,559.3 317.8,556.7 319.0,554.5 C320.2,552.3 321.3,550.2 322.5,548.0 C323.7,545.8 324.9,543.3 326.0,541.5 C327.1,539.7 328.2,538.0 329.0,537.0 C329.8,536.0 330.3,535.8 331.0,535.8 C331.7,535.8 332.2,536.0 333.0,537.0 C333.8,538.0 334.9,539.7 336.0,541.5 C337.1,543.3 338.3,545.8 339.5,548.0 C340.7,550.2 341.8,552.7 343.0,555.0 C344.2,557.3 345.4,559.6 347.0,562.0 C348.6,564.4 350.5,567.4 352.5,569.5 C354.5,571.6 356.5,573.1 359.0,574.5 C361.5,575.9 364.0,576.9 367.5,577.8 C371.0,578.7 374.6,579.5 380.0,580.0 C385.4,580.5 396.7,580.8 400.0,581.0" fill="none" stroke="url(#gfade)" stroke-width="1.3"/><path d="M620.0,581.0 C625.0,580.9 639.2,580.9 650.0,580.6 C660.8,580.3 675.0,579.8 685.0,579.2 C695.0,578.6 701.7,577.9 710.0,577.0 C718.3,576.1 726.7,575.0 735.0,573.7 C743.3,572.4 751.7,570.7 760.0,569.0 C768.3,567.3 777.5,565.2 785.0,563.5 C792.5,561.8 798.8,560.1 805.0,558.5 C811.2,556.9 816.3,555.4 822.5,553.7 C828.7,552.0 835.8,550.0 842.0,548.5 C848.2,547.0 854.5,545.6 860.0,544.5 C865.5,543.4 870.2,542.6 875.0,542.0 C879.8,541.4 884.8,541.1 889.0,541.0 C893.2,540.9 896.5,541.1 900.0,541.4 C903.5,541.7 906.7,542.2 910.0,542.7 C913.3,543.2 916.7,543.8 920.0,544.6 C923.3,545.4 927.0,546.5 930.0,547.5 C933.0,548.5 935.6,549.5 938.0,550.5 C940.4,551.5 943.3,553.2 944.4,553.7" fill="none" stroke="#1a70be" stroke-width="1.3"/><circle cx="331" cy="535.5" r="5.8" fill="#3fd23c" stroke="#101010" stroke-width="0.8"/><text x="331" y="538.6" font-family="Liberation Sans" font-size="8.5" font-weight="bold" text-anchor="middle" fill="#141414">1</text><circle cx="369" cy="557.5" r="5.8" fill="#c25ae8" stroke="#101010" stroke-width="0.8"/><text x="369" y="560.6" font-family="Liberation Sans" font-size="8.5" font-weight="bold" text-anchor="middle" fill="#141414">2</text><circle cx="688" cy="581.5" r="5.8" fill="#e6de2c" stroke="#101010" stroke-width="0.8"/><text x="688" y="584.6" font-family="Liberation Sans" font-size="8.5" font-weight="bold" text-anchor="middle" fill="#141414">3</text><circle cx="889" cy="541.5" r="5.8" fill="#35c6e4" stroke="#101010" stroke-width="0.8"/><text x="889" y="544.6" font-family="Liberation Sans" font-size="8.5" font-weight="bold" text-anchor="middle" fill="#141414">4</text></svg><div class="t" style="left:212px;top:458.10px;line-height:17px;font-size:13px;color:#878787;font-weight:normal;letter-spacing:0px;transform:scaleX(0.99);transform-origin:0 50%;">20HZ</div><div class="t" style="left:283px;top:458.10px;line-height:17px;font-size:13px;color:#878787;font-weight:normal;letter-spacing:0px;transform:scaleX(0.99);transform-origin:0 50%;">40HZ</div><div class="t" style="left:354px;top:458.10px;line-height:17px;font-size:13px;color:#878787;font-weight:normal;letter-spacing:0px;transform:scaleX(0.99);transform-origin:0 50%;">80HZ</div><div class="t" style="left:425px;top:458.10px;line-height:17px;font-size:13px;color:#878787;font-weight:normal;letter-spacing:0px;transform:scaleX(0.99);transform-origin:0 50%;">160HZ</div><div class="t" style="left:495px;top:458.10px;line-height:17px;font-size:13px;color:#878787;font-weight:normal;letter-spacing:0px;transform:scaleX(0.99);transform-origin:0 50%;">320HZ</div><div class="t" style="left:566px;top:458.10px;line-height:17px;font-size:13px;color:#878787;font-weight:normal;letter-spacing:0px;transform:scaleX(0.99);transform-origin:0 50%;">640HZ</div><div class="t" style="left:635px;top:458.10px;line-height:17px;font-size:13px;color:#878787;font-weight:normal;letter-spacing:0px;transform:scaleX(0.955);transform-origin:0 50%;">1.3KHZ</div><div class="t" style="left:707px;top:458.10px;line-height:17px;font-size:13px;color:#878787;font-weight:normal;letter-spacing:0px;transform:scaleX(0.955);transform-origin:0 50%;">2.5KHZ</div><div class="t" style="left:779px;top:458.10px;line-height:17px;font-size:13px;color:#878787;font-weight:normal;letter-spacing:0px;transform:scaleX(0.955);transform-origin:0 50%;">5.1KHZ</div><div class="t" style="left:853px;top:458.10px;line-height:17px;font-size:13px;color:#878787;font-weight:normal;letter-spacing:0px;transform:scaleX(0.97);transform-origin:0 50%;">10KHZ</div><div class="t" style="left:901px;top:458.10px;line-height:17px;font-size:13px;color:#878787;font-weight:normal;letter-spacing:0px;transform:scaleX(0.97);transform-origin:0 50%;">20KHZ</div><div class="t" style="left:224.5px;top:476.70px;line-height:17px;font-size:13px;color:#878787;font-weight:normal;letter-spacing:0px;transform:translateX(-100%);">+20</div><div class="t" style="left:224.5px;top:571.10px;line-height:17px;font-size:13px;color:#878787;font-weight:normal;letter-spacing:0px;transform:translateX(-100%);">0dB</div><div class="t" style="left:224.5px;top:673.50px;line-height:17px;font-size:13px;color:#878787;font-weight:normal;letter-spacing:0px;transform:translateX(-100%);">-20</div><div class="t" style="left:813.7px;top:487.10px;line-height:19px;font-size:14.4px;color:#b8b8b8;font-weight:normal;letter-spacing:0px;transform:scaleX(0.95);transform-origin:0 50%;">Frequency - 616 Hz</div><div class="t" style="left:275px;top:488.80px;line-height:20px;font-size:15px;color:#8e8e8e;font-weight:bold;letter-spacing:0.9px;">EQ</div><svg class="r" style="left:235px;top:481.6px;" width="32" height="32" viewBox="0 0 32 32"><circle cx="16" cy="16" r="12" fill="none" stroke="#1780de" stroke-width="2.4"/><g stroke="#1780de" stroke-width="1.5" stroke-linecap="round"><path d="M10.5,9 V23 M16,7.5 V24.5 M21.5,9 V23"/></g><circle cx="10.5" cy="15" r="2.1" fill="#1780de"/><circle cx="16" cy="18" r="2.1" fill="#1780de"/><circle cx="21.5" cy="15" r="2.1" fill="#1780de"/></svg><svg class="r" style="left:200px;top:690px" width="100" height="18" viewBox="0 0 100 18"><polygon points="0.9,0 85.3,0 79.3,16.2 0.9,16.2" fill="#0d0d0e"/><polygon points="0.9,0 47.3,0 41.6,16.2 0.9,16.2" fill="#0e1319"/></svg><div class="t" style="left:207.1px;top:688.40px;line-height:20px;font-size:15px;color:#1a78d0;font-weight:bold;letter-spacing:0.2px;">1 - 4</div><div class="t" style="left:247.3px;top:688.40px;line-height:20px;font-size:15px;color:#9a9a9a;font-weight:bold;letter-spacing:0.5px;">5 - 8</div><div class="t" style="left:298.5px;top:694.00px;line-height:17px;font-size:13px;color:#868686;font-weight:bold;letter-spacing:0.47px;">Visual</div><div class="t" style="left:353.5px;top:694.00px;line-height:17px;font-size:13px;color:#868686;font-weight:bold;letter-spacing:0.47px;">Solo</div><div class="t" style="left:484.5px;top:694.00px;line-height:17px;font-size:13px;color:#868686;font-weight:bold;letter-spacing:0.47px;">BW</div><div class="t" style="left:525px;top:694.00px;line-height:17px;font-size:13px;color:#868686;font-weight:bold;letter-spacing:0.47px;">Solo</div><div class="t" style="left:567.5px;top:694.00px;line-height:17px;font-size:13px;color:#868686;font-weight:bold;letter-spacing:0.47px;">Note</div><div class="t" style="left:681.5px;top:694.00px;line-height:17px;font-size:13px;color:#868686;font-weight:bold;letter-spacing:0.47px;">Freq</div><div class="t" style="left:723px;top:694.00px;line-height:17px;font-size:13px;color:#868686;font-weight:bold;letter-spacing:0.47px;">Lock</div><div class="t" style="left:853.5px;top:694.00px;line-height:17px;font-size:13px;color:#868686;font-weight:bold;letter-spacing:0.47px;">Gain</div><div class="t" style="left:909px;top:694.00px;line-height:17px;font-size:13px;color:#868686;font-weight:bold;letter-spacing:0.47px;">Lock</div><svg class="r" style="left:0;top:0" width="1600" height="900" viewBox="0 0 1600 900"><rect x="394" y="727" width="2" height="135.5" fill="#060606"/><rect x="560.5" y="727" width="2" height="135.5" fill="#060606"/><rect x="771" y="727" width="2" height="135.5" fill="#060606"/><g stroke="#0a0a0a" stroke-width="4.4" stroke-linecap="round" opacity="0.6"><path d="M199.7,724.0 V745.0 M207.79999999999998,724.0 V745.0 M216.0,724.0 V745.0"/></g><g stroke="#3fdc38" stroke-width="2.3" stroke-linecap="round"><path d="M199.7,724.0 V745.0 M207.79999999999998,724.0 V745.0 M216.0,724.0 V745.0"/></g><rect x="196.39999999999998" y="731.3" width="6.6" height="3.4" rx="1.6" fill="#3fdc38"/><rect x="204.49999999999997" y="735.5999999999999" width="6.6" height="3.4" rx="1.6" fill="#3fdc38"/><rect x="212.7" y="733.4" width="6.6" height="3.4" rx="1.6" fill="#3fdc38"/><rect x="319" y="733.5" width="49" height="2" fill="#111111"/><rect x="467" y="733.5" width="72" height="2" fill="#111111"/><rect x="583" y="733.5" width="160" height="2" fill="#111111"/><rect x="843" y="733.5" width="83" height="2" fill="#111111"/><circle cx="319" cy="734.5" r="9.4" fill="#070707"/><circle cx="319" cy="734.5" r="8.8" fill="none" stroke="#242424" stroke-width="0.7"/><circle cx="319" cy="734.5" r="6.4" fill="#3fdc38" opacity="0.25"/><circle cx="319" cy="734.5" r="5.2" fill="#3fdc38"/><circle cx="368" cy="734.5" r="9.4" fill="#070707"/><circle cx="368" cy="734.5" r="8.8" fill="none" stroke="#242424" stroke-width="0.7"/><circle cx="368" cy="734.5" r="6.3" fill="#0f3411"/><rect x="411.5" y="726.5" width="55.5" height="16" fill="#161617"/><rect x="608.5" y="726.5" width="55.5" height="16" fill="#161617"/><rect x="787.5" y="726.5" width="55.5" height="16" fill="#161617"/><circle cx="495.5" cy="734.5" r="17" fill="#030303"/><path d="M486.95,744.69 A13.3,13.3 0 1 1 504.05,744.69" fill="none" stroke="#12300f" stroke-width="2.8"/><path d="M486.95,744.69 A13.3,13.3 0 0 1 482.27,733.11" fill="none" stroke="#3fdc38" stroke-width="2.8"/><circle cx="495.5" cy="734.5" r="8.3" fill="#151515" stroke="#3a3a3a" stroke-width="0.9"/><path d="M492.72,734.21 L487.84,733.70" stroke="#f4f4f4" stroke-width="2.1"/><circle cx="539.3" cy="734.5" r="9.4" fill="#070707"/><circle cx="539.3" cy="734.5" r="8.8" fill="none" stroke="#242424" stroke-width="0.7"/><circle cx="539.3" cy="734.5" r="6.3" fill="#0f3411"/><circle cx="583" cy="734.5" r="9.4" fill="#070707"/><circle cx="583" cy="734.5" r="8.8" fill="none" stroke="#242424" stroke-width="0.7"/><circle cx="583" cy="734.5" r="6.3" fill="#0f3411"/><circle cx="697" cy="734.5" r="17" fill="#030303"/><path d="M688.45,744.69 A13.3,13.3 0 1 1 705.55,744.69" fill="none" stroke="#12300f" stroke-width="2.8"/><path d="M688.45,744.69 A13.3,13.3 0 0 1 683.90,736.81" fill="none" stroke="#3fdc38" stroke-width="2.8"/><circle cx="697" cy="734.5" r="8.3" fill="#151515" stroke="#3a3a3a" stroke-width="0.9"/><path d="M694.24,734.99 L689.42,735.84" stroke="#f4f4f4" stroke-width="2.1"/><circle cx="742.5" cy="734.5" r="9.4" fill="#070707"/><circle cx="742.5" cy="734.5" r="8.8" fill="none" stroke="#242424" stroke-width="0.7"/><circle cx="742.5" cy="734.5" r="6.3" fill="#0f3411"/><circle cx="870.7" cy="734.5" r="17" fill="#030303"/><path d="M862.15,744.69 A13.3,13.3 0 1 1 879.25,744.69" fill="none" stroke="#12300f" stroke-width="2.8"/><path d="M870.70,721.20 A13.3,13.3 0 0 1 882.22,727.85" fill="none" stroke="#3fdc38" stroke-width="2.8"/><circle cx="870.7" cy="734.5" r="8.3" fill="#151515" stroke="#3a3a3a" stroke-width="0.9"/><path d="M873.12,733.10 L877.37,730.65" stroke="#f4f4f4" stroke-width="2.1"/><circle cx="926.3" cy="734.5" r="9.4" fill="#070707"/><circle cx="926.3" cy="734.5" r="8.8" fill="none" stroke="#242424" stroke-width="0.7"/><circle cx="926.3" cy="734.5" r="6.3" fill="#0f3411"/><g stroke="#0a0a0a" stroke-width="4.4" stroke-linecap="round" opacity="0.6"><path d="M199.7,763.0 V784.0 M207.79999999999998,763.0 V784.0 M216.0,763.0 V784.0"/></g><g stroke="#c455ee" stroke-width="2.3" stroke-linecap="round"><path d="M199.7,763.0 V784.0 M207.79999999999998,763.0 V784.0 M216.0,763.0 V784.0"/></g><rect x="196.39999999999998" y="770.3" width="6.6" height="3.4" rx="1.6" fill="#c455ee"/><rect x="204.49999999999997" y="774.5999999999999" width="6.6" height="3.4" rx="1.6" fill="#c455ee"/><rect x="212.7" y="772.4" width="6.6" height="3.4" rx="1.6" fill="#c455ee"/><rect x="319" y="772.5" width="49" height="2" fill="#111111"/><rect x="467" y="772.5" width="72" height="2" fill="#111111"/><rect x="583" y="772.5" width="160" height="2" fill="#111111"/><rect x="843" y="772.5" width="83" height="2" fill="#111111"/><circle cx="319" cy="773.5" r="9.4" fill="#070707"/><circle cx="319" cy="773.5" r="8.8" fill="none" stroke="#242424" stroke-width="0.7"/><circle cx="319" cy="773.5" r="6.4" fill="#c455ee" opacity="0.25"/><circle cx="319" cy="773.5" r="5.2" fill="#c455ee"/><circle cx="368" cy="773.5" r="9.4" fill="#070707"/><circle cx="368" cy="773.5" r="8.8" fill="none" stroke="#242424" stroke-width="0.7"/><circle cx="368" cy="773.5" r="6.3" fill="#36123f"/><rect x="411.5" y="765.5" width="55.5" height="16" fill="#161617"/><rect x="608.5" y="765.5" width="55.5" height="16" fill="#161617"/><rect x="787.5" y="765.5" width="55.5" height="16" fill="#161617"/><circle cx="495.5" cy="773.5" r="17" fill="#030303"/><path d="M486.95,783.69 A13.3,13.3 0 1 1 504.05,783.69" fill="none" stroke="#34123f" stroke-width="2.8"/><path d="M486.95,783.69 A13.3,13.3 0 0 1 495.50,760.20" fill="none" stroke="#c455ee" stroke-width="2.8"/><circle cx="495.5" cy="773.5" r="8.3" fill="#151515" stroke="#3a3a3a" stroke-width="0.9"/><path d="M495.50,770.70 L495.50,765.80" stroke="#f4f4f4" stroke-width="2.1"/><circle cx="539.3" cy="773.5" r="9.4" fill="#070707"/><circle cx="539.3" cy="773.5" r="8.8" fill="none" stroke="#242424" stroke-width="0.7"/><circle cx="539.3" cy="773.5" r="6.3" fill="#36123f"/><circle cx="583" cy="773.5" r="9.4" fill="#070707"/><circle cx="583" cy="773.5" r="8.8" fill="none" stroke="#242424" stroke-width="0.7"/><circle cx="583" cy="773.5" r="6.3" fill="#36123f"/><circle cx="697" cy="773.5" r="17" fill="#030303"/><path d="M688.45,783.69 A13.3,13.3 0 1 1 705.55,783.69" fill="none" stroke="#34123f" stroke-width="2.8"/><path d="M688.45,783.69 A13.3,13.3 0 0 1 683.90,771.19" fill="none" stroke="#c455ee" stroke-width="2.8"/><circle cx="697" cy="773.5" r="8.3" fill="#151515" stroke="#3a3a3a" stroke-width="0.9"/><path d="M694.24,773.01 L689.42,772.16" stroke="#f4f4f4" stroke-width="2.1"/><circle cx="742.5" cy="773.5" r="9.4" fill="#070707"/><circle cx="742.5" cy="773.5" r="8.8" fill="none" stroke="#242424" stroke-width="0.7"/><circle cx="742.5" cy="773.5" r="6.4" fill="#c455ee" opacity="0.25"/><circle cx="742.5" cy="773.5" r="5.2" fill="#c455ee"/><circle cx="870.7" cy="773.5" r="17" fill="#030303"/><path d="M862.15,783.69 A13.3,13.3 0 1 1 879.25,783.69" fill="none" stroke="#34123f" stroke-width="2.8"/><path d="M870.70,760.20 A13.3,13.3 0 0 1 876.32,761.45" fill="none" stroke="#c455ee" stroke-width="2.8"/><circle cx="870.7" cy="773.5" r="8.3" fill="#151515" stroke="#3a3a3a" stroke-width="0.9"/><path d="M871.88,770.96 L873.95,766.52" stroke="#f4f4f4" stroke-width="2.1"/><circle cx="926.3" cy="773.5" r="9.4" fill="#070707"/><circle cx="926.3" cy="773.5" r="8.8" fill="none" stroke="#242424" stroke-width="0.7"/><circle cx="926.3" cy="773.5" r="6.3" fill="#36123f"/><g stroke="#0a0a0a" stroke-width="4.4" stroke-linecap="round" opacity="0.6"><path d="M199.7,802.0 V823.0 M207.79999999999998,802.0 V823.0 M216.0,802.0 V823.0"/></g><g stroke="#ece23a" stroke-width="2.3" stroke-linecap="round"><path d="M199.7,802.0 V823.0 M207.79999999999998,802.0 V823.0 M216.0,802.0 V823.0"/></g><rect x="196.39999999999998" y="809.3" width="6.6" height="3.4" rx="1.6" fill="#ece23a"/><rect x="204.49999999999997" y="813.5999999999999" width="6.6" height="3.4" rx="1.6" fill="#ece23a"/><rect x="212.7" y="811.4" width="6.6" height="3.4" rx="1.6" fill="#ece23a"/><rect x="319" y="811.5" width="49" height="2" fill="#111111"/><rect x="467" y="811.5" width="72" height="2" fill="#111111"/><rect x="583" y="811.5" width="160" height="2" fill="#111111"/><rect x="843" y="811.5" width="83" height="2" fill="#111111"/><circle cx="319" cy="812.5" r="9.4" fill="#070707"/><circle cx="319" cy="812.5" r="8.8" fill="none" stroke="#242424" stroke-width="0.7"/><circle cx="319" cy="812.5" r="6.4" fill="#ece23a" opacity="0.25"/><circle cx="319" cy="812.5" r="5.2" fill="#ece23a"/><circle cx="368" cy="812.5" r="9.4" fill="#070707"/><circle cx="368" cy="812.5" r="8.8" fill="none" stroke="#242424" stroke-width="0.7"/><circle cx="368" cy="812.5" r="6.3" fill="#35320d"/><rect x="411.5" y="804.5" width="55.5" height="16" fill="#161617"/><rect x="608.5" y="804.5" width="55.5" height="16" fill="#161617"/><rect x="787.5" y="804.5" width="55.5" height="16" fill="#161617"/><circle cx="495.5" cy="812.5" r="17" fill="#030303"/><path d="M486.95,822.69 A13.3,13.3 0 1 1 504.05,822.69" fill="none" stroke="#33300d" stroke-width="2.8"/><path d="M486.95,822.69 A13.3,13.3 0 0 1 485.68,803.53" fill="none" stroke="#ece23a" stroke-width="2.8"/><circle cx="495.5" cy="812.5" r="8.3" fill="#151515" stroke="#3a3a3a" stroke-width="0.9"/><path d="M493.43,810.61 L489.81,807.31" stroke="#f4f4f4" stroke-width="2.1"/><circle cx="539.3" cy="812.5" r="9.4" fill="#070707"/><circle cx="539.3" cy="812.5" r="8.8" fill="none" stroke="#242424" stroke-width="0.7"/><circle cx="539.3" cy="812.5" r="6.3" fill="#35320d"/><circle cx="583" cy="812.5" r="9.4" fill="#070707"/><circle cx="583" cy="812.5" r="8.8" fill="none" stroke="#242424" stroke-width="0.7"/><circle cx="583" cy="812.5" r="6.3" fill="#35320d"/><circle cx="697" cy="812.5" r="17" fill="#030303"/><path d="M688.45,822.69 A13.3,13.3 0 1 1 705.55,822.69" fill="none" stroke="#33300d" stroke-width="2.8"/><path d="M688.45,822.69 A13.3,13.3 0 0 1 704.63,801.61" fill="none" stroke="#ece23a" stroke-width="2.8"/><circle cx="697" cy="812.5" r="8.3" fill="#151515" stroke="#3a3a3a" stroke-width="0.9"/><path d="M698.61,810.21 L701.42,806.19" stroke="#f4f4f4" stroke-width="2.1"/><circle cx="742.5" cy="812.5" r="9.4" fill="#070707"/><circle cx="742.5" cy="812.5" r="8.8" fill="none" stroke="#242424" stroke-width="0.7"/><circle cx="742.5" cy="812.5" r="6.3" fill="#35320d"/><circle cx="870.7" cy="812.5" r="17" fill="#030303"/><path d="M862.15,822.69 A13.3,13.3 0 1 1 879.25,822.69" fill="none" stroke="#33300d" stroke-width="2.8"/><circle cx="870.70" cy="799.20" r="1.4" fill="#ece23a"/><circle cx="870.7" cy="812.5" r="8.3" fill="#151515" stroke="#3a3a3a" stroke-width="0.9"/><path d="M870.70,809.70 L870.70,804.80" stroke="#f4f4f4" stroke-width="2.1"/><circle cx="926.3" cy="812.5" r="9.4" fill="#070707"/><circle cx="926.3" cy="812.5" r="8.8" fill="none" stroke="#242424" stroke-width="0.7"/><circle cx="926.3" cy="812.5" r="6.3" fill="#35320d"/><g stroke="#0a0a0a" stroke-width="4.4" stroke-linecap="round" opacity="0.6"><path d="M199.7,841.0 V862.0 M207.79999999999998,841.0 V862.0 M216.0,841.0 V862.0"/></g><g stroke="#36cdea" stroke-width="2.3" stroke-linecap="round"><path d="M199.7,841.0 V862.0 M207.79999999999998,841.0 V862.0 M216.0,841.0 V862.0"/></g><rect x="196.39999999999998" y="848.3" width="6.6" height="3.4" rx="1.6" fill="#36cdea"/><rect x="204.49999999999997" y="852.5999999999999" width="6.6" height="3.4" rx="1.6" fill="#36cdea"/><rect x="212.7" y="850.4" width="6.6" height="3.4" rx="1.6" fill="#36cdea"/><rect x="319" y="850.5" width="49" height="2" fill="#111111"/><rect x="467" y="850.5" width="72" height="2" fill="#111111"/><rect x="583" y="850.5" width="160" height="2" fill="#111111"/><rect x="843" y="850.5" width="83" height="2" fill="#111111"/><circle cx="319" cy="851.5" r="9.4" fill="#070707"/><circle cx="319" cy="851.5" r="8.8" fill="none" stroke="#242424" stroke-width="0.7"/><circle cx="319" cy="851.5" r="6.4" fill="#36cdea" opacity="0.25"/><circle cx="319" cy="851.5" r="5.2" fill="#36cdea"/><circle cx="368" cy="851.5" r="9.4" fill="#070707"/><circle cx="368" cy="851.5" r="8.8" fill="none" stroke="#242424" stroke-width="0.7"/><circle cx="368" cy="851.5" r="6.3" fill="#0d3537"/><rect x="411.5" y="843.5" width="55.5" height="16" fill="#161617"/><rect x="608.5" y="843.5" width="55.5" height="16" fill="#161617"/><rect x="787.5" y="843.5" width="55.5" height="16" fill="#161617"/><circle cx="495.5" cy="851.5" r="17" fill="#030303"/><path d="M486.95,861.69 A13.3,13.3 0 1 1 504.05,861.69" fill="none" stroke="#0d3336" stroke-width="2.8"/><path d="M486.95,861.69 A13.3,13.3 0 0 1 495.50,838.20" fill="none" stroke="#36cdea" stroke-width="2.8"/><circle cx="495.5" cy="851.5" r="8.3" fill="#151515" stroke="#3a3a3a" stroke-width="0.9"/><path d="M495.50,848.70 L495.50,843.80" stroke="#f4f4f4" stroke-width="2.1"/><circle cx="539.3" cy="851.5" r="9.4" fill="#070707"/><circle cx="539.3" cy="851.5" r="8.8" fill="none" stroke="#242424" stroke-width="0.7"/><circle cx="539.3" cy="851.5" r="6.3" fill="#0d3537"/><circle cx="583" cy="851.5" r="9.4" fill="#070707"/><circle cx="583" cy="851.5" r="8.8" fill="none" stroke="#242424" stroke-width="0.7"/><circle cx="583" cy="851.5" r="6.3" fill="#0d3537"/><circle cx="697" cy="851.5" r="17" fill="#030303"/><path d="M688.45,861.69 A13.3,13.3 0 1 1 705.55,861.69" fill="none" stroke="#0d3336" stroke-width="2.8"/><path d="M688.45,861.69 A13.3,13.3 0 1 1 709.05,857.12" fill="none" stroke="#36cdea" stroke-width="2.8"/><circle cx="697" cy="851.5" r="8.3" fill="#151515" stroke="#3a3a3a" stroke-width="0.9"/><path d="M699.54,852.68 L703.98,854.75" stroke="#f4f4f4" stroke-width="2.1"/><circle cx="742.5" cy="851.5" r="9.4" fill="#070707"/><circle cx="742.5" cy="851.5" r="8.8" fill="none" stroke="#242424" stroke-width="0.7"/><circle cx="742.5" cy="851.5" r="6.4" fill="#36cdea" opacity="0.25"/><circle cx="742.5" cy="851.5" r="5.2" fill="#36cdea"/><circle cx="870.7" cy="851.5" r="17" fill="#030303"/><path d="M862.15,861.69 A13.3,13.3 0 1 1 879.25,861.69" fill="none" stroke="#0d3336" stroke-width="2.8"/><path d="M870.70,838.20 A13.3,13.3 0 0 1 880.89,842.95" fill="none" stroke="#36cdea" stroke-width="2.8"/><circle cx="870.7" cy="851.5" r="8.3" fill="#151515" stroke="#3a3a3a" stroke-width="0.9"/><path d="M872.84,849.70 L876.60,846.55" stroke="#f4f4f4" stroke-width="2.1"/><circle cx="926.3" cy="851.5" r="9.4" fill="#070707"/><circle cx="926.3" cy="851.5" r="8.8" fill="none" stroke="#242424" stroke-width="0.7"/><circle cx="926.3" cy="851.5" r="6.3" fill="#0d3537"/></svg><div class="t" style="left:231.3px;top:724.50px;line-height:20px;font-size:15px;color:#767676;font-weight:bold;letter-spacing:0.02px;">Band 1</div><div class="t" style="left:439.8px;top:726.70px;line-height:16px;font-size:12.3px;color:#b2b2b2;font-weight:normal;letter-spacing:0px;transform:translateX(-50%);">20 %</div><div class="t" style="left:636.3px;top:726.70px;line-height:16px;font-size:12.3px;color:#b2b2b2;font-weight:normal;letter-spacing:0px;transform:translateX(-50%);">55 Hz</div><div class="t" style="left:816.8px;top:726.70px;line-height:16px;font-size:12.3px;color:#b2b2b2;font-weight:normal;letter-spacing:0px;transform:translateX(-50%);">9.0 dB</div><div class="t" style="left:231.3px;top:763.50px;line-height:20px;font-size:15px;color:#767676;font-weight:bold;letter-spacing:0.02px;">Band 2</div><div class="t" style="left:439.8px;top:765.70px;line-height:16px;font-size:12.3px;color:#b2b2b2;font-weight:normal;letter-spacing:0px;transform:translateX(-50%);">50 %</div><div class="t" style="left:636.3px;top:765.70px;line-height:16px;font-size:12.3px;color:#b2b2b2;font-weight:normal;letter-spacing:0px;transform:translateX(-50%);">80 Hz</div><div class="t" style="left:816.8px;top:765.70px;line-height:16px;font-size:12.3px;color:#b2b2b2;font-weight:normal;letter-spacing:0px;transform:translateX(-50%);">4.6 dB</div><div class="t" style="left:231.3px;top:802.50px;line-height:20px;font-size:15px;color:#767676;font-weight:bold;letter-spacing:0.02px;">Band 3</div><div class="t" style="left:439.8px;top:804.70px;line-height:16px;font-size:12.3px;color:#b2b2b2;font-weight:normal;letter-spacing:0px;transform:translateX(-50%);">33 %</div><div class="t" style="left:636.3px;top:804.70px;line-height:16px;font-size:12.3px;color:#b2b2b2;font-weight:normal;letter-spacing:0px;transform:translateX(-50%);">1.7 kHz</div><div class="t" style="left:816.8px;top:804.70px;line-height:16px;font-size:12.3px;color:#b2b2b2;font-weight:normal;letter-spacing:0px;transform:translateX(-50%);">0.0 dB</div><div class="t" style="left:231.3px;top:841.50px;line-height:20px;font-size:15px;color:#767676;font-weight:bold;letter-spacing:0.02px;">Band 4</div><div class="t" style="left:439.8px;top:843.70px;line-height:16px;font-size:12.3px;color:#b2b2b2;font-weight:normal;letter-spacing:0px;transform:translateX(-50%);">50 %</div><div class="t" style="left:636.3px;top:843.70px;line-height:16px;font-size:12.3px;color:#b2b2b2;font-weight:normal;letter-spacing:0px;transform:translateX(-50%);">12.0 kHz</div><div class="t" style="left:816.8px;top:843.70px;line-height:16px;font-size:12.3px;color:#b2b2b2;font-weight:normal;letter-spacing:0px;transform:translateX(-50%);">7.9 dB</div><svg class="r" style="left:0;top:0" width="1600" height="900" viewBox="0 0 1600 900"><defs>
<linearGradient id="kbezel" x1="0.3" y1="0" x2="0.7" y2="1"><stop offset="0" stop-color="#f0f0f0"/><stop offset="0.45" stop-color="#a9a9a9"/><stop offset="1" stop-color="#6a645c"/></linearGradient>
<radialGradient id="kcap" cx="0.5" cy="0.45" r="0.6"><stop offset="0" stop-color="#2296ff"/><stop offset="0.75" stop-color="#1d8cf8"/><stop offset="1" stop-color="#1878d8"/></radialGradient>
<radialGradient id="kshadow" cx="0.5" cy="0.5" r="0.5"><stop offset="0.86" stop-color="#0a0a0b" stop-opacity="0.85"/><stop offset="0.93" stop-color="#0a0a0b" stop-opacity="0.55"/><stop offset="1" stop-color="#0a0a0b" stop-opacity="0"/></radialGradient>
<linearGradient id="ktick" x1="0" y1="0" x2="0" y2="1"><stop offset="0" stop-color="#7c7c7c"/><stop offset="0.5" stop-color="#555"/><stop offset="1" stop-color="#2c2c2c"/></linearGradient><radialGradient id="rnavy" cx="0.5" cy="0.5" r="0.5"><stop offset="0" stop-color="#0b2846"/><stop offset="0.55" stop-color="#0a2036"/><stop offset="1" stop-color="#05090f"/></radialGradient></defs><rect x="963.5" y="127" width="315" height="22" fill="#131313"/><rect x="1282" y="127" width="125.5" height="22" fill="#0a3660"/><rect x="1282" y="127" width="125.5" height="22" fill="none" stroke="#0a2c4e" stroke-width="1"/><rect x="960" y="150.7" width="453" height="2.1" fill="#060606"/><rect x="960" y="152.79999999999998" width="453" height="1" fill="#262729"/><rect x="960" y="253.8" width="453" height="2.1" fill="#060606"/><rect x="960" y="255.9" width="453" height="1" fill="#262729"/><rect x="960" y="380.1" width="453" height="2.1" fill="#060606"/><rect x="960" y="382.20000000000005" width="453" height="1" fill="#262729"/><rect x="960" y="502.1" width="453" height="2.1" fill="#060606"/><rect x="960" y="504.20000000000005" width="453" height="1" fill="#262729"/><rect x="960" y="736.3" width="453" height="2.1" fill="#060606"/><rect x="960" y="738.4" width="453" height="1" fill="#262729"/><rect x="1175.2" y="382" width="2.2" height="120.2" fill="#060606"/><rect x="1177.4" y="383" width="1" height="119" fill="#262729"/><rect x="1186.3" y="548.5" width="2" height="176" fill="#060606"/><rect x="1380" y="165.5" width="20" height="88" fill="#161617"/><path d="M1296.3,253.8 V197.0 A35.0,35.0 0 0 1 1366.3,197.0 V253.8 Z" fill="#191a1c"/><circle cx="1331.3" cy="196.5" r="34" fill="url(#kshadow)"/><path d="M1320.44,221.59 A27.8,27.8 0 1 1 1342.16,221.59" fill="none" stroke="url(#ktick)" stroke-width="5.6" stroke-dasharray="0.88 1.06"/><circle cx="1331.3" cy="196" r="24.6" fill="#040404"/><path d="M1317.52,210.77 A20.2,20.2 0 1 1 1345.08,210.77" fill="none" stroke="#07131f" stroke-width="2.8"/><path d="M1317.52,210.77 A20.2,20.2 0 0 1 1317.02,181.72" fill="none" stroke="#1a69b6" stroke-width="2.5"/><circle cx="1331.3" cy="196.8" r="16.6" fill="#000" opacity="0.7"/><circle cx="1331.3" cy="196" r="15.8" fill="url(#kbezel)"/><circle cx="1331.3" cy="196" r="12.1" fill="url(#kcap)"/><path d="M1329.04,193.74 L1321.40,186.10" stroke="#f6f6f6" stroke-width="2.2"/><path d="M1118.0,380.1 V323.7 A35.0,35.0 0 0 1 1188.0,323.7 V380.1 Z" fill="#191a1c"/><circle cx="1153" cy="323.2" r="34" fill="url(#kshadow)"/><path d="M1142.14,348.29 A27.8,27.8 0 1 1 1163.86,348.29" fill="none" stroke="url(#ktick)" stroke-width="5.6" stroke-dasharray="0.88 1.06"/><circle cx="1153" cy="322.7" r="24.6" fill="#040404"/><path d="M1139.22,337.47 A20.2,20.2 0 1 1 1166.78,337.47" fill="none" stroke="#07131f" stroke-width="2.8"/><path d="M1139.22,337.47 A20.2,20.2 0 0 1 1153.00,302.50" fill="none" stroke="#1a69b6" stroke-width="2.5"/><circle cx="1153" cy="323.5" r="16.6" fill="#000" opacity="0.7"/><circle cx="1153" cy="322.7" r="15.8" fill="url(#kbezel)"/><circle cx="1153" cy="322.7" r="12.1" fill="url(#kcap)"/><path d="M1153.00,319.50 L1153.00,308.70" stroke="#f6f6f6" stroke-width="2.2"/><path d="M1212.7,380.1 V323.7 A35.0,35.0 0 0 1 1282.7,323.7 V380.1 Z" fill="#191a1c"/><circle cx="1247.7" cy="323.2" r="34" fill="url(#kshadow)"/><path d="M1236.84,348.29 A27.8,27.8 0 1 1 1258.56,348.29" fill="none" stroke="url(#ktick)" stroke-width="5.6" stroke-dasharray="0.88 1.06"/><circle cx="1247.7" cy="322.7" r="24.6" fill="#040404"/><path d="M1233.92,337.47 A20.2,20.2 0 1 1 1261.48,337.47" fill="none" stroke="#07131f" stroke-width="2.8"/><path d="M1233.92,337.47 A20.2,20.2 0 0 1 1230.57,312.00" fill="none" stroke="#1a69b6" stroke-width="2.5"/><circle cx="1247.7" cy="323.5" r="16.6" fill="#000" opacity="0.7"/><circle cx="1247.7" cy="322.7" r="15.8" fill="url(#kbezel)"/><circle cx="1247.7" cy="322.7" r="12.1" fill="url(#kcap)"/><path d="M1244.99,321.00 L1235.83,315.28" stroke="#f6f6f6" stroke-width="2.2"/><path d="M1308.7,380.1 V323.7 A35.0,35.0 0 0 1 1378.7,323.7 V380.1 Z" fill="#191a1c"/><circle cx="1343.7" cy="323.2" r="34" fill="url(#kshadow)"/><path d="M1332.84,348.29 A27.8,27.8 0 1 1 1354.56,348.29" fill="none" stroke="url(#ktick)" stroke-width="5.6" stroke-dasharray="0.88 1.06"/><circle cx="1343.7" cy="322.7" r="24.6" fill="#040404"/><path d="M1329.92,337.47 A20.2,20.2 0 1 1 1357.48,337.47" fill="none" stroke="#07131f" stroke-width="2.8"/><path d="M1329.92,337.47 A20.2,20.2 0 0 1 1323.61,320.59" fill="none" stroke="#1a69b6" stroke-width="2.5"/><circle cx="1343.7" cy="323.5" r="16.6" fill="#000" opacity="0.7"/><circle cx="1343.7" cy="322.7" r="15.8" fill="url(#kbezel)"/><circle cx="1343.7" cy="322.7" r="12.1" fill="url(#kcap)"/><path d="M1340.52,322.37 L1329.78,321.24" stroke="#f6f6f6" stroke-width="2.2"/><path d="M1042.5,502.1 V445.2 A35.0,35.0 0 0 1 1112.5,445.2 V502.1 Z" fill="#191a1c"/><circle cx="1077.5" cy="444.7" r="34" fill="url(#kshadow)"/><path d="M1066.64,469.79 A27.8,27.8 0 1 1 1088.36,469.79" fill="none" stroke="url(#ktick)" stroke-width="5.6" stroke-dasharray="0.88 1.06"/><circle cx="1077.5" cy="444.2" r="24.6" fill="#040404"/><path d="M1063.72,458.97 A20.2,20.2 0 1 1 1091.28,458.97" fill="none" stroke="#07131f" stroke-width="2.8"/><path d="M1063.72,458.97 A20.2,20.2 0 1 1 1091.78,458.48" fill="none" stroke="#1a69b6" stroke-width="2.5"/><circle cx="1077.5" cy="445.0" r="16.6" fill="#000" opacity="0.7"/><circle cx="1077.5" cy="444.2" r="15.8" fill="url(#kbezel)"/><circle cx="1077.5" cy="444.2" r="12.1" fill="url(#kcap)"/><path d="M1079.76,446.46 L1087.40,454.10" stroke="#f6f6f6" stroke-width="2.2"/><path d="M1211.7,502.1 V445.2 A35.0,35.0 0 0 1 1281.7,445.2 V502.1 Z" fill="#191a1c"/><circle cx="1246.7" cy="444.7" r="34" fill="url(#kshadow)"/><path d="M1235.84,469.79 A27.8,27.8 0 1 1 1257.56,469.79" fill="none" stroke="url(#ktick)" stroke-width="5.6" stroke-dasharray="0.88 1.06"/><circle cx="1246.7" cy="444.2" r="24.6" fill="#040404"/><path d="M1232.92,458.97 A20.2,20.2 0 1 1 1260.48,458.97" fill="none" stroke="#07131f" stroke-width="2.8"/><path d="M1232.92,458.97 A20.2,20.2 0 0 1 1246.70,424.00" fill="none" stroke="#1a69b6" stroke-width="2.5"/><circle cx="1246.7" cy="445.0" r="16.6" fill="#000" opacity="0.7"/><circle cx="1246.7" cy="444.2" r="15.8" fill="url(#kbezel)"/><circle cx="1246.7" cy="444.2" r="12.1" fill="url(#kcap)"/><path d="M1246.70,441.00 L1246.70,430.20" stroke="#f6f6f6" stroke-width="2.2"/><path d="M1308.7,502.1 V445.2 A35.0,35.0 0 0 1 1378.7,445.2 V502.1 Z" fill="#191a1c"/><circle cx="1343.7" cy="444.7" r="34" fill="url(#kshadow)"/><path d="M1332.84,469.79 A27.8,27.8 0 1 1 1354.56,469.79" fill="none" stroke="url(#ktick)" stroke-width="5.6" stroke-dasharray="0.88 1.06"/><circle cx="1343.7" cy="444.2" r="24.6" fill="#040404"/><path d="M1329.92,458.97 A20.2,20.2 0 1 1 1357.48,458.97" fill="none" stroke="#07131f" stroke-width="2.8"/><path d="M1329.92,458.97 A20.2,20.2 0 1 1 1357.98,458.48" fill="none" stroke="#1a69b6" stroke-width="2.5"/><circle cx="1343.7" cy="445.0" r="16.6" fill="#000" opacity="0.7"/><circle cx="1343.7" cy="444.2" r="15.8" fill="url(#kbezel)"/><circle cx="1343.7" cy="444.2" r="12.1" fill="url(#kcap)"/><path d="M1345.96,446.46 L1353.60,454.10" stroke="#f6f6f6" stroke-width="2.2"/><path d="M995.5,736.3 V679.0 A35.0,35.0 0 0 1 1065.5,679.0 V736.3 Z" fill="#191a1c"/><circle cx="1030.5" cy="678.5" r="34" fill="url(#kshadow)"/><path d="M1019.64,703.59 A27.8,27.8 0 1 1 1041.36,703.59" fill="none" stroke="url(#ktick)" stroke-width="5.6" stroke-dasharray="0.88 1.06"/><circle cx="1030.5" cy="678" r="24.6" fill="#040404"/><path d="M1016.72,692.77 A20.2,20.2 0 1 1 1044.28,692.77" fill="none" stroke="#07131f" stroke-width="2.8"/><path d="M1016.72,692.77 A20.2,20.2 0 0 1 1010.61,674.49" fill="none" stroke="#1a69b6" stroke-width="2.5"/><circle cx="1030.5" cy="678.8" r="16.6" fill="#000" opacity="0.7"/><circle cx="1030.5" cy="678" r="15.8" fill="url(#kbezel)"/><circle cx="1030.5" cy="678" r="12.1" fill="url(#kcap)"/><path d="M1027.35,677.44 L1016.71,675.57" stroke="#f6f6f6" stroke-width="2.2"/><path d="M1093.0,736.3 V679.0 A35.0,35.0 0 0 1 1163.0,679.0 V736.3 Z" fill="#191a1c"/><circle cx="1128" cy="678.5" r="34" fill="url(#kshadow)"/><path d="M1117.14,703.59 A27.8,27.8 0 1 1 1138.86,703.59" fill="none" stroke="url(#ktick)" stroke-width="5.6" stroke-dasharray="0.88 1.06"/><circle cx="1128" cy="678" r="24.6" fill="#040404"/><path d="M1114.22,692.77 A20.2,20.2 0 1 1 1141.78,692.77" fill="none" stroke="#07131f" stroke-width="2.8"/><circle cx="1128" cy="678.8" r="16.6" fill="#000" opacity="0.7"/><circle cx="1128" cy="678" r="15.8" fill="url(#kbezel)"/><circle cx="1128" cy="678" r="12.1" fill="url(#kcap)"/><path d="M1125.82,680.34 L1118.45,688.24" stroke="#f6f6f6" stroke-width="2.2"/><path d="M1211.7,736.3 V679.0 A35.0,35.0 0 0 1 1281.7,679.0 V736.3 Z" fill="#191a1c"/><circle cx="1246.7" cy="678.5" r="34" fill="url(#kshadow)"/><path d="M1235.84,703.59 A27.8,27.8 0 1 1 1257.56,703.59" fill="none" stroke="url(#ktick)" stroke-width="5.6" stroke-dasharray="0.88 1.06"/><circle cx="1246.7" cy="678" r="24.6" fill="#040404"/><path d="M1232.92,692.77 A20.2,20.2 0 1 1 1260.48,692.77" fill="none" stroke="#07131f" stroke-width="2.8"/><path d="M1232.92,692.77 A20.2,20.2 0 1 1 1260.98,692.28" fill="none" stroke="#1a69b6" stroke-width="2.5"/><circle cx="1246.7" cy="678.8" r="16.6" fill="#000" opacity="0.7"/><circle cx="1246.7" cy="678" r="15.8" fill="url(#kbezel)"/><circle cx="1246.7" cy="678" r="12.1" fill="url(#kcap)"/><path d="M1248.96,680.26 L1256.60,687.90" stroke="#f6f6f6" stroke-width="2.2"/><path d="M1308.7,736.3 V679.0 A35.0,35.0 0 0 1 1378.7,679.0 V736.3 Z" fill="#191a1c"/><circle cx="1343.7" cy="678.5" r="34" fill="url(#kshadow)"/><path d="M1332.84,703.59 A27.8,27.8 0 1 1 1354.56,703.59" fill="none" stroke="url(#ktick)" stroke-width="5.6" stroke-dasharray="0.88 1.06"/><circle cx="1343.7" cy="678" r="24.6" fill="#040404"/><path d="M1329.92,692.77 A20.2,20.2 0 1 1 1357.48,692.77" fill="none" stroke="#07131f" stroke-width="2.8"/><circle cx="1343.7" cy="678.8" r="16.6" fill="#000" opacity="0.7"/><circle cx="1343.7" cy="678" r="15.8" fill="url(#kbezel)"/><circle cx="1343.7" cy="678" r="12.1" fill="url(#kcap)"/><path d="M1341.52,680.34 L1334.15,688.24" stroke="#f6f6f6" stroke-width="2.2"/><path d="M995.5,876 V818.5 A35.0,35.0 0 0 1 1065.5,818.5 V876 Z" fill="#191a1c"/><circle cx="1030.5" cy="818.0" r="34" fill="url(#kshadow)"/><path d="M1019.64,843.09 A27.8,27.8 0 1 1 1041.36,843.09" fill="none" stroke="url(#ktick)" stroke-width="5.6" stroke-dasharray="0.88 1.06"/><circle cx="1030.5" cy="817.5" r="24.6" fill="#040404"/><path d="M1016.72,832.27 A20.2,20.2 0 1 1 1044.28,832.27" fill="none" stroke="#07131f" stroke-width="2.8"/><path d="M1016.72,832.27 A20.2,20.2 0 1 1 1050.50,814.69" fill="none" stroke="#1a69b6" stroke-width="2.5"/><circle cx="1030.5" cy="818.3" r="16.6" fill="#000" opacity="0.7"/><circle cx="1030.5" cy="817.5" r="15.8" fill="url(#kbezel)"/><circle cx="1030.5" cy="817.5" r="12.1" fill="url(#kcap)"/><path d="M1033.67,817.05 L1044.36,815.55" stroke="#f6f6f6" stroke-width="2.2"/><rect x="1061.5" y="827.6" width="40" height="1.8" fill="#0b0b0b"/><circle cx="1303.3" cy="229.6" r="3.7" fill="#5a0909"/><circle cx="988.4" cy="216.7" r="9.3" fill="#050506"/><circle cx="988.4" cy="216.7" r="9" fill="none" stroke="#29292b" stroke-width="0.6"/><circle cx="988.4" cy="216.7" r="6.5" fill="#0a2137"/><circle cx="1033" cy="216.7" r="9.3" fill="#050506"/><circle cx="1033" cy="216.7" r="9" fill="none" stroke="#29292b" stroke-width="0.6"/><circle cx="1033" cy="216.7" r="6.5" fill="#0a2137"/><circle cx="1100.4" cy="216.7" r="9.3" fill="#050506"/><circle cx="1100.4" cy="216.7" r="9" fill="none" stroke="#29292b" stroke-width="0.6"/><circle cx="1100.4" cy="216.7" r="6.5" fill="#0a2137"/><circle cx="1144.7" cy="216.7" r="9.3" fill="#050506"/><circle cx="1144.7" cy="216.7" r="9" fill="none" stroke="#29292b" stroke-width="0.6"/><circle cx="1144.7" cy="216.7" r="6.5" fill="#0a2137"/><circle cx="1208.6" cy="216" r="9.3" fill="#050506"/><circle cx="1208.6" cy="216" r="9" fill="none" stroke="#29292b" stroke-width="0.6"/><circle cx="1208.6" cy="216" r="6.5" fill="#0a2137"/><circle cx="985" cy="298.5" r="9.3" fill="#050506"/><circle cx="985" cy="298.5" r="9" fill="none" stroke="#29292b" stroke-width="0.6"/><circle cx="985" cy="298.5" r="6.5" fill="#0a2137"/><circle cx="985" cy="321.5" r="9.3" fill="#050506"/><circle cx="985" cy="321.5" r="9" fill="none" stroke="#29292b" stroke-width="0.6"/><circle cx="985" cy="321.5" r="6.5" fill="#0a2137"/><circle cx="985" cy="344.5" r="9.3" fill="#050506"/><circle cx="985" cy="344.5" r="9" fill="none" stroke="#29292b" stroke-width="0.6"/><circle cx="985" cy="344.5" r="6.5" fill="#0a2137"/><circle cx="985" cy="344.5" r="4.2" fill="#1c86ee"/><circle cx="985" cy="367.5" r="9.3" fill="#050506"/><circle cx="985" cy="367.5" r="9" fill="none" stroke="#29292b" stroke-width="0.6"/><circle cx="985" cy="367.5" r="6.5" fill="#0a2137"/><circle cx="985" cy="367.5" r="4.2" fill="#1c86ee"/><circle cx="986.6" cy="457" r="9.3" fill="#050506"/><circle cx="986.6" cy="457" r="9" fill="none" stroke="#29292b" stroke-width="0.6"/><circle cx="986.6" cy="457" r="6.5" fill="#0a2137"/><circle cx="986.6" cy="457" r="4.2" fill="#1c86ee"/><circle cx="1095" cy="523" r="9.3" fill="#050506"/><circle cx="1095" cy="523" r="9" fill="none" stroke="#29292b" stroke-width="0.6"/><circle cx="1095" cy="523" r="6.5" fill="#0a2137"/><circle cx="1300.7" cy="523" r="9.3" fill="#050506"/><circle cx="1300.7" cy="523" r="9" fill="none" stroke="#29292b" stroke-width="0.6"/><circle cx="1300.7" cy="523" r="6.5" fill="#0a2137"/><circle cx="1300.7" cy="523" r="4.2" fill="#1c86ee"/><circle cx="1023.6" cy="556.5" r="9.3" fill="#050506"/><circle cx="1023.6" cy="556.5" r="9" fill="none" stroke="#29292b" stroke-width="0.6"/><circle cx="1023.6" cy="556.5" r="6.5" fill="#0a2137"/><circle cx="1023.6" cy="556.5" r="4.2" fill="#1c86ee"/><circle cx="1023.6" cy="580.5" r="9.3" fill="#050506"/><circle cx="1023.6" cy="580.5" r="9" fill="none" stroke="#29292b" stroke-width="0.6"/><circle cx="1023.6" cy="580.5" r="6.5" fill="#0a2137"/><circle cx="1023.6" cy="604.5" r="9.3" fill="#050506"/><circle cx="1023.6" cy="604.5" r="9" fill="none" stroke="#29292b" stroke-width="0.6"/><circle cx="1023.6" cy="604.5" r="6.5" fill="#0a2137"/><circle cx="1023.6" cy="628.5" r="9.3" fill="#050506"/><circle cx="1023.6" cy="628.5" r="9" fill="none" stroke="#29292b" stroke-width="0.6"/><circle cx="1023.6" cy="628.5" r="6.5" fill="#0a2137"/><circle cx="1235.3" cy="556.5" r="9.3" fill="#050506"/><circle cx="1235.3" cy="556.5" r="9" fill="none" stroke="#29292b" stroke-width="0.6"/><circle cx="1235.3" cy="556.5" r="6.5" fill="#0a2137"/><circle cx="1235.3" cy="580.5" r="9.3" fill="#050506"/><circle cx="1235.3" cy="580.5" r="9" fill="none" stroke="#29292b" stroke-width="0.6"/><circle cx="1235.3" cy="580.5" r="6.5" fill="#0a2137"/><circle cx="1235.3" cy="604.5" r="9.3" fill="#050506"/><circle cx="1235.3" cy="604.5" r="9" fill="none" stroke="#29292b" stroke-width="0.6"/><circle cx="1235.3" cy="604.5" r="6.5" fill="#0a2137"/><circle cx="1235.3" cy="628.5" r="9.3" fill="#050506"/><circle cx="1235.3" cy="628.5" r="9" fill="none" stroke="#29292b" stroke-width="0.6"/><circle cx="1235.3" cy="628.5" r="6.5" fill="#0a2137"/><circle cx="1102.3" cy="780" r="9.3" fill="#050506"/><circle cx="1102.3" cy="780" r="9" fill="none" stroke="#29292b" stroke-width="0.6"/><circle cx="1102.3" cy="780" r="6.5" fill="#0a2137"/><circle cx="1102.3" cy="804" r="9.3" fill="#050506"/><circle cx="1102.3" cy="804" r="9" fill="none" stroke="#29292b" stroke-width="0.6"/><circle cx="1102.3" cy="804" r="6.5" fill="#0a2137"/><circle cx="1102.3" cy="828.5" r="9.3" fill="#050506"/><circle cx="1102.3" cy="828.5" r="9" fill="none" stroke="#29292b" stroke-width="0.6"/><circle cx="1102.3" cy="828.5" r="6.5" fill="#0a2137"/><circle cx="1255.7" cy="780" r="9.3" fill="#050506"/><circle cx="1255.7" cy="780" r="9" fill="none" stroke="#29292b" stroke-width="0.6"/><circle cx="1255.7" cy="780" r="6.5" fill="#0a2137"/><circle cx="1255.7" cy="780" r="4.2" fill="#1c86ee"/><circle cx="1255.7" cy="804" r="9.3" fill="#050506"/><circle cx="1255.7" cy="804" r="9" fill="none" stroke="#29292b" stroke-width="0.6"/><circle cx="1255.7" cy="804" r="6.5" fill="#0a2137"/><circle cx="1255.7" cy="828.5" r="9.3" fill="#050506"/><circle cx="1255.7" cy="828.5" r="9" fill="none" stroke="#29292b" stroke-width="0.6"/><circle cx="1255.7" cy="828.5" r="6.5" fill="#0a2137"/><circle cx="1255.7" cy="853.6" r="9.3" fill="#050506"/><circle cx="1255.7" cy="853.6" r="9" fill="none" stroke="#29292b" stroke-width="0.6"/><circle cx="1255.7" cy="853.6" r="6.5" fill="#0a2137"/><rect x="1133" y="262.2" width="105.5" height="15.2" fill="#141415"/><rect x="1116" y="821.3" width="56" height="15.3" fill="#141415"/><rect x="1094" y="846.8" width="78" height="15" fill="#141415"/><rect x="980" y="195.3" width="11" height="2" fill="#6a6a6a"/><rect x="1046" y="195.3" width="10.5" height="2" fill="#6a6a6a"/><rect x="1092.6" y="195.3" width="13" height="2" fill="#6a6a6a"/><rect x="1156.4" y="195.3" width="12.6" height="2" fill="#6a6a6a"/><g fill="none" stroke="#858585" stroke-width="2"><path d="M1366.5,774 H1373.4 V795"/><path d="M1373.4,833.5 V854.5 H1366.5"/></g></svg><div class="t" style="left:1122px;top:130.80px;line-height:16px;font-size:12.5px;color:#b8b8b8;font-weight:normal;letter-spacing:-0.09px;transform:translateX(-50%);">Mono / Stereo Split Frequency: 103 Hz</div><div class="t" style="left:1344.5px;top:127.80px;line-height:20px;font-size:15px;color:#2d669e;font-weight:bold;letter-spacing:-0.1px;transform:translateX(-50%);">BYPASS</div><div class="t" style="left:997.5px;top:155.00px;line-height:20px;font-size:15px;color:#767676;font-weight:bold;letter-spacing:0.04px;">CURRENT PRESET</div><div class="t" style="left:999px;top:186.70px;line-height:17px;font-size:13px;color:#707070;font-weight:bold;letter-spacing:0.56px;">Recall</div><div class="t" style="left:1116px;top:186.70px;line-height:17px;font-size:13px;color:#707070;font-weight:bold;letter-spacing:0.4px;">Save</div><div class="t" style="left:1005.5px;top:207.70px;line-height:18px;font-size:14px;color:#707070;font-weight:bold;letter-spacing:0px;">A</div><div class="t" style="left:1050px;top:207.70px;line-height:18px;font-size:14px;color:#707070;font-weight:bold;letter-spacing:0px;">B</div><div class="t" style="left:1116.7px;top:207.70px;line-height:18px;font-size:14px;color:#707070;font-weight:bold;letter-spacing:0px;">A</div><div class="t" style="left:1161.5px;top:207.70px;line-height:18px;font-size:14px;color:#707070;font-weight:bold;letter-spacing:0px;">B</div><div class="t" style="left:1224.5px;top:207.00px;line-height:17px;font-size:13px;color:#707070;font-weight:bold;letter-spacing:0.67px;">Current</div><div class="t" style="left:994.4px;top:260.50px;line-height:19px;font-size:14.5px;color:#8c8c8c;font-weight:bold;letter-spacing:-0.25px;">SPEC</div><div class="t" style="left:1083.5px;top:261.00px;line-height:17px;font-size:13px;color:#767676;font-weight:bold;letter-spacing:0.5px;">MODE</div><div class="t" style="left:1185.5px;top:260.80px;line-height:17px;font-size:13px;color:#bdbdbd;font-weight:normal;letter-spacing:0px;transform:translateX(-50%);">Spec L</div><div class="t" style="left:1001px;top:290.50px;line-height:16px;font-size:12.5px;color:#7c7c7c;font-weight:bold;letter-spacing:0.03px;">SHOW INPUT</div><div class="t" style="left:1001px;top:313.50px;line-height:16px;font-size:12.5px;color:#7c7c7c;font-weight:bold;letter-spacing:0.03px;">SHOW OUTPUT</div><div class="t" style="left:1001px;top:336.50px;line-height:16px;font-size:12.5px;color:#7c7c7c;font-weight:bold;letter-spacing:0.03px;">SHOW BOTH</div><div class="t" style="left:1001px;top:359.50px;line-height:16px;font-size:12.5px;color:#7c7c7c;font-weight:bold;letter-spacing:0.03px;">FREEZE</div><div class="t" style="left:993.5px;top:387.80px;line-height:20px;font-size:15px;color:#8c8c8c;font-weight:bold;letter-spacing:0.3px;">SATURATION</div><div class="t" style="left:1218px;top:387.80px;line-height:20px;font-size:15px;color:#8c8c8c;font-weight:bold;letter-spacing:0.3px;">AIR</div><div class="t" style="left:1003px;top:448.80px;line-height:16px;font-size:12.5px;color:#7c7c7c;font-weight:bold;letter-spacing:0.1px;">PRE</div><div class="t" style="left:997px;top:513.00px;line-height:20px;font-size:15px;color:#8c8c8c;font-weight:bold;letter-spacing:0.3px;">FILTER</div><div class="t" style="left:1113.5px;top:513.90px;line-height:17px;font-size:13px;color:#707070;font-weight:bold;letter-spacing:0.64px;">HP Off</div><div class="t" style="left:1319px;top:513.90px;line-height:17px;font-size:13px;color:#707070;font-weight:bold;letter-spacing:0.64px;">LP Off</div><div class="t" style="left:1042.2px;top:547.30px;line-height:17px;font-size:13px;color:#707070;font-weight:bold;letter-spacing:0.64px;">HP 12 dB Type I</div><div class="t" style="left:1254px;top:547.30px;line-height:17px;font-size:13px;color:#707070;font-weight:bold;letter-spacing:0.64px;">LP 12 dB Type I</div><div class="t" style="left:1042.2px;top:571.30px;line-height:17px;font-size:13px;color:#707070;font-weight:bold;letter-spacing:0.64px;">HP 12 dB Type II</div><div class="t" style="left:1254px;top:571.30px;line-height:17px;font-size:13px;color:#707070;font-weight:bold;letter-spacing:0.64px;">LP 12 dB Type II</div><div class="t" style="left:1042.2px;top:595.30px;line-height:17px;font-size:13px;color:#707070;font-weight:bold;letter-spacing:0.64px;">HP 24 dB Type I</div><div class="t" style="left:1254px;top:595.30px;line-height:17px;font-size:13px;color:#707070;font-weight:bold;letter-spacing:0.64px;">LP 24 dB Type I</div><div class="t" style="left:1042.2px;top:619.30px;line-height:17px;font-size:13px;color:#707070;font-weight:bold;letter-spacing:0.64px;">HP 24 dB Type II</div><div class="t" style="left:1254px;top:619.30px;line-height:17px;font-size:13px;color:#707070;font-weight:bold;letter-spacing:0.64px;">LP 24 dB Type II</div><div class="t" style="left:997px;top:743.00px;line-height:20px;font-size:15px;color:#767676;font-weight:bold;letter-spacing:0.14px;">MONO/STEREO SPLIT FILTER</div><div class="t" style="left:1121px;top:770.50px;line-height:17px;font-size:13px;color:#707070;font-weight:bold;letter-spacing:0.64px;">Solo</div><div class="t" style="left:1121px;top:794.50px;line-height:17px;font-size:13px;color:#707070;font-weight:bold;letter-spacing:0.64px;">Visual</div><div class="t" style="left:1177.3px;top:819.20px;line-height:17px;font-size:13px;color:#707070;font-weight:bold;letter-spacing:0.6px;">Note</div><div class="t" style="left:1177.3px;top:844.60px;line-height:17px;font-size:13px;color:#707070;font-weight:bold;letter-spacing:0.6px;">Mode</div><div class="t" style="left:1146px;top:820.70px;line-height:16px;font-size:12px;color:#b8b8b8;font-weight:normal;letter-spacing:0px;transform:translateX(-50%);">103 Hz</div><div class="t" style="left:1132.5px;top:845.60px;line-height:17px;font-size:13px;color:#bdbdbd;font-weight:normal;letter-spacing:0px;transform:translateX(-50%);">Left</div><div class="t" style="left:1274px;top:770.50px;line-height:17px;font-size:13px;color:#707070;font-weight:bold;letter-spacing:0.64px;">&lt; 150 Hz</div><div class="t" style="left:1274px;top:794.50px;line-height:17px;font-size:13px;color:#707070;font-weight:bold;letter-spacing:0.64px;">&lt; 250 Hz</div><div class="t" style="left:1274px;top:819.00px;line-height:17px;font-size:13px;color:#707070;font-weight:bold;letter-spacing:0.64px;">&lt; 500 Hz</div><div class="t" style="left:1274px;top:843.80px;line-height:17px;font-size:13px;color:#707070;font-weight:bold;letter-spacing:0.64px;">Full Range</div><div class="t" style="left:1378.8px;top:798.30px;line-height:17px;font-size:13px;color:#707070;font-weight:bold;letter-spacing:0.7px;transform:translateX(-50%);">Split</div><div class="t" style="left:1378.8px;top:812.70px;line-height:17px;font-size:13px;color:#707070;font-weight:bold;letter-spacing:0.7px;transform:translateX(-50%);">Range</div><div class="t" style="left:1330.3999999999999px;top:222.10px;line-height:16px;font-size:12.3px;color:#b4b4b4;font-weight:normal;letter-spacing:0px;transform:translateX(-50%);">-6.8 dB</div><div class="t" style="left:1330.7px;top:236.70px;line-height:18px;font-size:14px;color:#909090;font-weight:bold;letter-spacing:0px;transform:translateX(-50%);">VOLUME</div><div class="t" style="left:1153px;top:348.80px;line-height:16px;font-size:12.3px;color:#b4b4b4;font-weight:normal;letter-spacing:0px;transform:translateX(-50%);">0.0 dB</div><div class="t" style="left:1152.4px;top:363.40px;line-height:18px;font-size:14px;color:#909090;font-weight:bold;letter-spacing:0px;transform:translateX(-50%);">BOOST</div><div class="t" style="left:1247.7px;top:348.80px;line-height:16px;font-size:12.3px;color:#b4b4b4;font-weight:normal;letter-spacing:0px;transform:translateX(-50%);">30 %</div><div class="t" style="left:1247.1000000000001px;top:363.40px;line-height:18px;font-size:14px;color:#909090;font-weight:bold;letter-spacing:0px;transform:translateX(-50%);">HOLD</div><div class="t" style="left:1343.7px;top:348.80px;line-height:16px;font-size:12.3px;color:#b4b4b4;font-weight:normal;letter-spacing:0px;transform:translateX(-50%);">19 %</div><div class="t" style="left:1343.1000000000001px;top:363.40px;line-height:18px;font-size:14px;color:#909090;font-weight:bold;letter-spacing:0px;transform:translateX(-50%);">REL</div><div class="t" style="left:1077.5px;top:470.30px;line-height:16px;font-size:12.3px;color:#b4b4b4;font-weight:normal;letter-spacing:0px;transform:translateX(-50%);">100 %</div><div class="t" style="left:1076.9px;top:484.90px;line-height:18px;font-size:14px;color:#909090;font-weight:bold;letter-spacing:0px;transform:translateX(-50%);">AMOUNT</div><div class="t" style="left:1246.7px;top:470.30px;line-height:16px;font-size:12.3px;color:#b4b4b4;font-weight:normal;letter-spacing:0px;transform:translateX(-50%);">3.0 dB</div><div class="t" style="left:1246.1000000000001px;top:484.90px;line-height:18px;font-size:14px;color:#909090;font-weight:bold;letter-spacing:0px;transform:translateX(-50%);">AMOUNT</div><div class="t" style="left:1343.7px;top:470.30px;line-height:16px;font-size:12.3px;color:#b4b4b4;font-weight:normal;letter-spacing:0px;transform:translateX(-50%);">40.0 kHz</div><div class="t" style="left:1343.1000000000001px;top:484.90px;line-height:18px;font-size:14px;color:#909090;font-weight:bold;letter-spacing:0px;transform:translateX(-50%);">FREQ</div><div class="t" style="left:1030.5px;top:704.10px;line-height:16px;font-size:12.3px;color:#b4b4b4;font-weight:normal;letter-spacing:0px;transform:translateX(-50%);">75 Hz</div><div class="t" style="left:1029.9px;top:718.70px;line-height:18px;font-size:14px;color:#909090;font-weight:bold;letter-spacing:0px;transform:translateX(-50%);">FREQ</div><div class="t" style="left:1128px;top:704.10px;line-height:16px;font-size:12.3px;color:#b4b4b4;font-weight:normal;letter-spacing:0px;transform:translateX(-50%);">0 %</div><div class="t" style="left:1127.4px;top:718.70px;line-height:18px;font-size:14px;color:#909090;font-weight:bold;letter-spacing:0px;transform:translateX(-50%);">Q</div><div class="t" style="left:1246.7px;top:704.10px;line-height:16px;font-size:12.3px;color:#b4b4b4;font-weight:normal;letter-spacing:0px;transform:translateX(-50%);">20.5 kHz</div><div class="t" style="left:1246.1000000000001px;top:718.70px;line-height:18px;font-size:14px;color:#909090;font-weight:bold;letter-spacing:0px;transform:translateX(-50%);">FREQ</div><div class="t" style="left:1343.7px;top:704.10px;line-height:16px;font-size:12.3px;color:#b4b4b4;font-weight:normal;letter-spacing:0px;transform:translateX(-50%);">0 %</div><div class="t" style="left:1343.1000000000001px;top:718.70px;line-height:18px;font-size:14px;color:#909090;font-weight:bold;letter-spacing:0px;transform:translateX(-50%);">Q</div><div class="t" style="left:1030.5px;top:843.60px;line-height:16px;font-size:12.3px;color:#b4b4b4;font-weight:normal;letter-spacing:0px;transform:translateX(-50%);">103 Hz</div><div class="t" style="left:1029.9px;top:858.20px;line-height:18px;font-size:14px;color:#909090;font-weight:bold;letter-spacing:0px;transform:translateX(-50%);">FREQ</div><svg class="r" style="left:0;top:0" width="1600" height="900" viewBox="0 0 1600 900"><polygon points="967.5,162.2 979,157.6 989.8,160.8 978,165.9" fill="#666666"/><g fill="none" stroke="#666666" stroke-width="2.3" stroke-linejoin="miter"><path d="M967.6,166.2 L977.6,169.8 L989.8,164.9"/><path d="M967.8,170.6 L977,173.9 L989.8,169.1"/></g><polygon points="973.80,260.59 978.60,260.59 978.30,263.10 979.73,263.70 981.30,261.71 984.69,265.10 982.70,266.67 983.30,268.10 985.81,267.80 985.81,272.60 983.30,272.30 982.70,273.73 984.69,275.30 981.30,278.69 979.73,276.70 978.30,277.30 978.60,279.81 973.80,279.81 974.10,277.30 972.67,276.70 971.10,278.69 967.71,275.30 969.70,273.73 969.10,272.30 966.59,272.60 966.59,267.80 969.10,268.10 969.70,266.67 967.71,265.10 971.10,261.71 972.67,263.70 974.10,263.10" fill="#1780de" stroke="#1780de" stroke-width="0.8" stroke-linejoin="round"/><circle cx="976.2" cy="270.2" r="3.7" fill="#141a22"/><circle cx="977" cy="397.3" r="10.2" fill="#1780de"/><polygon points="978.9,389.6 973.2,398.4 976,398.4 974.2,404.6 980.2,395.4 977.2,395.4" fill="#10233a"/><circle cx="1197.8" cy="398.3" r="10.6" fill="none" stroke="#1780de" stroke-width="1.7"/><path transform="rotate(10 1197.8 398.3)" d="M1199.0,395.7 C1203.8,389.8 1194.8,388.8 1192.3,392.1 C1194.3,393.3 1196.0,394.7 1196.3999999999999,395.90000000000003 Z" fill="#1780de"/><path transform="rotate(130 1197.8 398.3)" d="M1199.0,395.7 C1203.8,389.8 1194.8,388.8 1192.3,392.1 C1194.3,393.3 1196.0,394.7 1196.3999999999999,395.90000000000003 Z" fill="#1780de"/><path transform="rotate(250 1197.8 398.3)" d="M1199.0,395.7 C1203.8,389.8 1194.8,388.8 1192.3,392.1 C1194.3,393.3 1196.0,394.7 1196.3999999999999,395.90000000000003 Z" fill="#1780de"/><circle cx="1197.8" cy="398.3" r="1.9" fill="#1780de"/><path d="M964.8,522.4 C966.5,522.4 967.5,522.4 968.6,523.4 L971.4,529.4 L974.8,521.2 L978.9,533 L982.4,510 L984.6,521.4 C985.5,522.8 987,522.8 989.6,522.8" fill="none" stroke="#1780de" stroke-width="2.3" stroke-linejoin="round" stroke-linecap="round"/><circle cx="979" cy="533.2" r="2.3" fill="#1780de"/><circle cx="982.4" cy="510.2" r="2.3" fill="#1780de"/><circle cx="975.3" cy="753" r="8.2" fill="none" stroke="#1780de" stroke-width="1.9"/><circle cx="983.7" cy="753" r="8.2" fill="none" stroke="#1780de" stroke-width="1.9"/></svg>
</body></html>
